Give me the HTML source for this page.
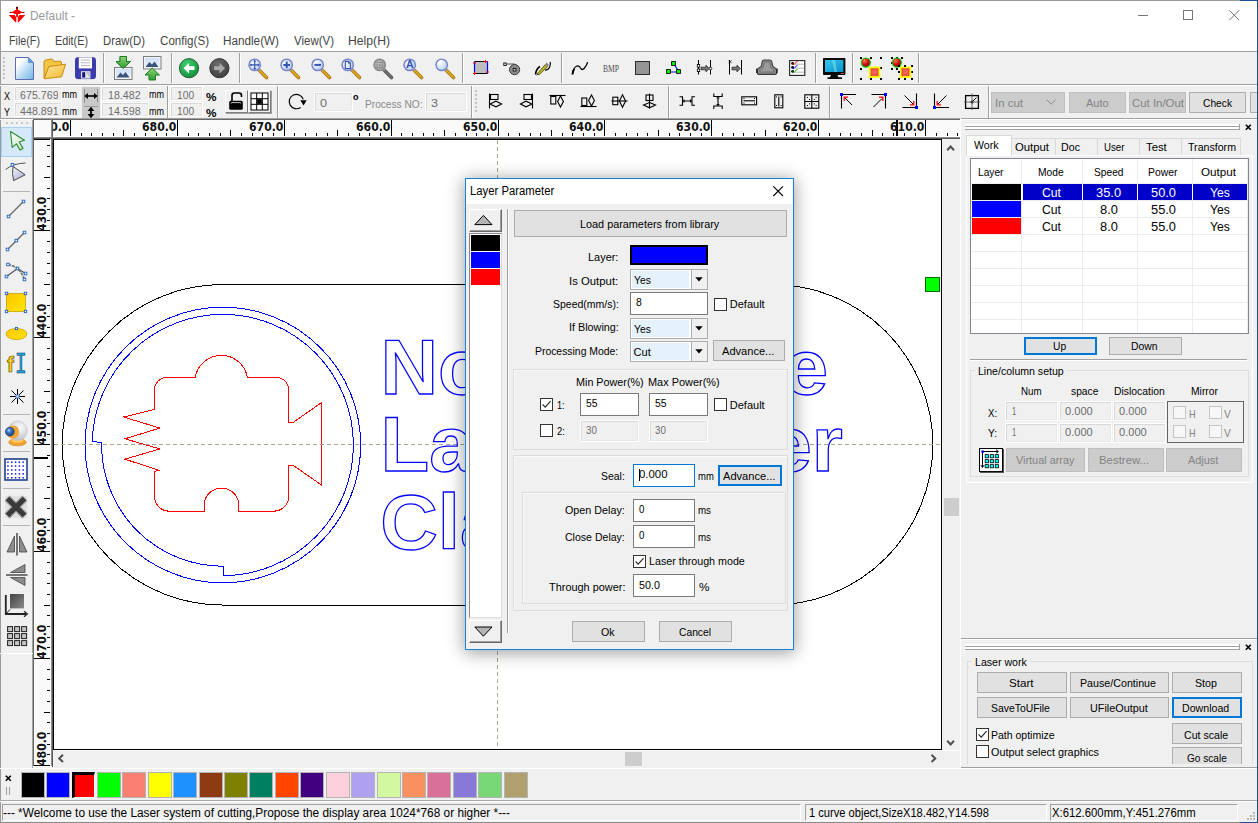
<!DOCTYPE html>
<html><head><meta charset="utf-8"><title>Default -</title>
<style>
html,body{margin:0;padding:0;}
body{width:1258px;height:823px;position:relative;overflow:hidden;background:#f0f0f0;font-family:"Liberation Sans",sans-serif;font-size:11px;}
div,svg,span.t{position:absolute;box-sizing:border-box;}
span.t{white-space:pre;line-height:normal;transform-origin:0 0;}
svg{overflow:visible;}
.in{background:#f0f0f0;border:1px solid #fff;box-shadow:inset 1px 1px 0 #d9d9d9, inset -1px -1px 0 #e8e8e8;}
.btn{background:#e1e1e1;border:1px solid #adadad;}
.btnd{background:#cccccc;border:1px solid #bfbfbf;}
</style></head><body>
<!-- s1_frame -->
<div style="left:0px;top:0px;width:1258px;height:51px;background:#fff"></div>
<div style="left:0px;top:0px;width:1258px;height:1px;background:#9a9a9a"></div>
<div style="left:0px;top:0px;width:1px;height:823px;background:#9a9a9a"></div>
<div style="left:1240px;top:0px;width:18px;height:1px;background:#1d4f8c"></div>
<svg style="left:8px;top:6px;" width="18" height="17" viewBox="0 0 18 17"><g fill="#f00"><rect x="8.1" y="0.9" width="1.9" height="10"/><path d="M1.8 5.9 L4 5.9 L7.6 4 L10.6 4 L14.2 5.9 L16.2 5.9 L16.2 7 L12.3 7 L12.3 7.9 L5.8 7.9 L5.8 7 L1.8 7 Z"/><path d="M0.8 9 L6.6 9 L7.9 10.8 L8.3 10.8 L8.3 16.3 L7.5 16.3 Z M17.3 9 L11.5 9 L10.2 10.8 L9.8 10.8 L9.8 16.3 L10.6 16.3 Z"/></g><rect x="8.1" y="0.9" width="1.9" height="1.8" fill="#500"/><rect x="1.8" y="5.9" width="1.6" height="1.1" fill="#600"/><rect x="14.6" y="5.9" width="1.6" height="1.1" fill="#600"/></svg>
<span class="t" style="left:30.30px;top:9.44px;font-size:12px;color:#999;transform:scaleX(0.9922);">Default -</span>
<svg style="left:1136px;top:10px;" width="102" height="12" viewBox="0 0 102 12"><g stroke="#777" stroke-width="1" fill="none"><path d="M2 5.5 H12"/><rect x="47.5" y="0.5" width="9" height="9"/><path d="M93.3 0.3 L103.2 10.2 M103.2 0.3 L93.3 10.2"/></g></svg>
<span class="t" style="left:8.50px;top:34.14px;font-size:12px;color:#454545;transform:scaleX(0.8944);">File(F)</span>
<span class="t" style="left:54.50px;top:34.14px;font-size:12px;color:#454545;transform:scaleX(0.8998);">Edit(E)</span>
<span class="t" style="left:102.50px;top:34.14px;font-size:12px;color:#454545;transform:scaleX(0.9404);">Draw(D)</span>
<span class="t" style="left:159.50px;top:34.14px;font-size:12px;color:#454545;transform:scaleX(0.9667);">Config(S)</span>
<span class="t" style="left:223.00px;top:34.14px;font-size:12px;color:#454545;transform:scaleX(0.9765);">Handle(W)</span>
<span class="t" style="left:294.00px;top:34.14px;font-size:12px;color:#454545;transform:scaleX(0.9571);">View(V)</span>
<span class="t" style="left:348.00px;top:34.14px;font-size:12px;color:#454545;transform:scaleX(1.0160);">Help(H)</span>
<div style="left:0px;top:51px;width:1258px;height:1px;background:#a0a0a0"></div>
<div style="left:0px;top:84px;width:1258px;height:1px;background:#a0a0a0"></div>
<div style="left:0px;top:85px;width:1258px;height:1px;background:#fff"></div>
<div style="left:0px;top:118px;width:1258px;height:1px;background:#a0a0a0"></div>
<div style="left:0px;top:119px;width:1258px;height:1px;background:#fff"></div>
<!-- s2_tb1 -->
<svg width="0" height="0" style="left:0;top:0"><defs>
<radialGradient id="lens" cx="0.35" cy="0.3" r="0.8"><stop offset="0" stop-color="#ffffff"/><stop offset="0.6" stop-color="#cfe0f7"/><stop offset="1" stop-color="#a9c4ee"/></radialGradient>
<radialGradient id="lensg" cx="0.35" cy="0.3" r="0.8"><stop offset="0" stop-color="#bbb"/><stop offset="1" stop-color="#999"/></radialGradient>
<linearGradient id="pg" x1="0" y1="0" x2="1" y2="1"><stop offset="0.22" stop-color="#ffffff"/><stop offset="0.6" stop-color="#b5d8f3"/><stop offset="1" stop-color="#6fb4e6"/></linearGradient>
<linearGradient id="fold" x1="0" y1="0" x2="1" y2="1"><stop offset="0" stop-color="#fde9a0"/><stop offset="1" stop-color="#f0b62c"/></linearGradient>
<linearGradient id="gar" x1="0" y1="0" x2="0" y2="1"><stop offset="0" stop-color="#8fd67a"/><stop offset="1" stop-color="#2f9a2f"/></linearGradient>
<linearGradient id="sky" x1="0" y1="0" x2="0" y2="1"><stop offset="0" stop-color="#cfe0f8"/><stop offset="1" stop-color="#e8f0fb"/></linearGradient>
<radialGradient id="gball" cx="0.4" cy="0.3" r="0.8"><stop offset="0" stop-color="#3fd070"/><stop offset="1" stop-color="#0e8a36"/></radialGradient>
<radialGradient id="kball" cx="0.4" cy="0.3" r="0.8"><stop offset="0" stop-color="#6a6a6a"/><stop offset="1" stop-color="#3c3c3c"/></radialGradient>
<radialGradient id="rball" cx="0.35" cy="0.3" r="0.8"><stop offset="0" stop-color="#ff7a5a"/><stop offset="0.5" stop-color="#d01010"/><stop offset="1" stop-color="#7a0000"/></radialGradient>
<radialGradient id="rsq" cx="0.5" cy="0.5" r="0.7"><stop offset="0" stop-color="#f07060"/><stop offset="1" stop-color="#e03030"/></radialGradient>
<linearGradient id="scr" x1="0" y1="0" x2="1" y2="1"><stop offset="0" stop-color="#35c7ee"/><stop offset="1" stop-color="#0c93c9"/></linearGradient>
</defs></svg>
<div style="left:3px;top:57px;width:2px;height:2px;background:#c4c4c4"></div>
<div style="left:3px;top:61px;width:2px;height:2px;background:#c4c4c4"></div>
<div style="left:3px;top:65px;width:2px;height:2px;background:#c4c4c4"></div>
<div style="left:3px;top:69px;width:2px;height:2px;background:#c4c4c4"></div>
<div style="left:3px;top:73px;width:2px;height:2px;background:#c4c4c4"></div>
<div style="left:3px;top:77px;width:2px;height:2px;background:#c4c4c4"></div>
<svg style="left:15px;top:57px;" width="20" height="24" viewBox="0 0 20 24"><path d="M0.5 0.5 H13.5 L18.5 5.5 V22.5 H0.5 Z" fill="url(#pg)" stroke="#5f6cb4"/><path d="M13.5 0.5 V5.5 H18.5 Z" fill="#5b9be8" stroke="#5b86c9" stroke-width="0.8"/></svg>
<svg style="left:43px;top:58px;" width="24" height="23" viewBox="0 0 24 23"><path d="M1 20 L1 4 Q1 2.2 3 2 L8 1 Q9.5 0.8 10 2 L10.5 3.5 L17 3.2 Q18.5 3.2 18.5 5 L18.5 8 L6 9 Z" fill="#f4c543" stroke="#c98d14"/>
<path d="M1.2 20.8 L5.8 8.6 L22.6 6.2 L18.6 18.8 Z" fill="url(#fold)" stroke="#c98d14"/></svg>
<svg style="left:75px;top:57px;" width="22" height="23" viewBox="0 0 22 23"><path d="M2.2 0.8 H18.6 Q20.4 0.8 20.4 2.6 V19.6 Q20.4 21.6 18.6 21.6 H2.4 Q0.6 21.6 0.6 19.6 V2.6 Q0.6 0.8 2.2 0.8Z" fill="#3c3cb0" stroke="#30309c"/>
<rect x="3.8" y="0.4" width="13.2" height="11" fill="#fff"/><path d="M6 3H15M6 5.8H15M6 8.6H15" stroke="#b4b4b4" stroke-width="1"/>
<rect x="6" y="14.2" width="9.4" height="7.4" fill="#e4e6ee"/><rect x="7.2" y="15.2" width="3" height="5.4" fill="#16167a"/><path d="M11 15L14.6 15L14.6 21Z" fill="#a8a8b4" opacity=".7"/></svg>
<div style="left:103px;top:53px;width:1px;height:30px;background:#a0a0a0"></div>
<div style="left:104px;top:53px;width:1px;height:30px;background:#fff"></div>
<svg style="left:114px;top:56px;" width="19" height="25" viewBox="0 0 19 25"><path d="M6 0.5 H12.5 V5.5 H16.5 L9.2 12.5 L2 5.5 H6 Z" fill="url(#gar)" stroke="#1f7d22"/>
<rect x="0.5" y="11.5" width="17.5" height="12" fill="#f4f4f4" stroke="#7d7d7d"/><rect x="2" y="13" width="14.5" height="9" fill="url(#sky)"/>
<path d="M2.5 21.5 L6.5 16.5 L9 19 L11.5 16 L15.5 21.5 Z" fill="#3b5378"/>
<path d="M6 0.5 H12.5 V5.5 H16.5 L9.2 12.5 L2 5.5 H6 Z" fill="url(#gar)" stroke="#1f7d22" opacity="0.9"/></svg>
<svg style="left:143px;top:56px;" width="19" height="25" viewBox="0 0 19 25"><rect x="0.5" y="0.5" width="17.5" height="12.5" fill="#f4f4f4" stroke="#7d7d7d"/><rect x="2" y="2" width="14.5" height="9.5" fill="url(#sky)"/>
<path d="M2.5 11 L6.5 6 L9 8.5 L11.5 5.5 L15.5 11 Z" fill="#3b5378"/>
<path d="M9.2 12 L16.5 19 H12.5 V24 H6 V19 H2 Z" fill="url(#gar)" stroke="#1f7d22"/></svg>
<div style="left:171px;top:53px;width:1px;height:30px;background:#a0a0a0"></div>
<div style="left:172px;top:53px;width:1px;height:30px;background:#fff"></div>
<svg style="left:179px;top:58px;" width="21" height="21" viewBox="0 0 21 21"><circle cx="10" cy="10.2" r="9.6" fill="url(#gball)" stroke="#2c5a3a"/><path d="M4.5 10.2 L10 5 V8.3 H15.5 V12.1 H10 V15.4 Z" fill="#fff"/></svg>
<svg style="left:209px;top:58px;" width="21" height="21" viewBox="0 0 21 21"><circle cx="10.4" cy="10.2" r="9.6" fill="url(#kball)" stroke="#333"/><path d="M16 10.2 L10.5 5 V8.3 H5 V12.1 H10.5 V15.4 Z" fill="#a9a9a9"/></svg>
<div style="left:239px;top:53px;width:1px;height:30px;background:#a0a0a0"></div>
<div style="left:240px;top:53px;width:1px;height:30px;background:#fff"></div>
<svg style="left:248px;top:58px;" width="21" height="22" viewBox="0 0 21 22"><path d="M10.5 11.5 L18.5 19.5" stroke="#a87612" stroke-width="3.6" stroke-linecap="round"/>
<path d="M11 12 L18.3 19.3" stroke="#d8a324" stroke-width="2.2" stroke-linecap="round"/>
<path d="M8.5 9.5 L11.5 12.5" stroke="#9aa0c8" stroke-width="2"/>
<circle cx="6.7" cy="6.9" r="5.7" fill="url(#lens)" stroke="#7b84c9" stroke-width="1.5"/><path d="M6.7 2.6V11.2M2.4 6.9H11" stroke="#3553b0" stroke-width="1.1"/><path d="M6.7 1.8L5.2 3.8H8.2ZM6.7 12L5.2 10H8.2ZM1.6 6.9L3.6 5.4V8.4ZM11.8 6.9L9.8 5.4V8.4Z" fill="#3553b0"/></svg>
<svg style="left:280px;top:58px;" width="21" height="22" viewBox="0 0 21 22"><path d="M10.5 11.5 L18.5 19.5" stroke="#a87612" stroke-width="3.6" stroke-linecap="round"/>
<path d="M11 12 L18.3 19.3" stroke="#d8a324" stroke-width="2.2" stroke-linecap="round"/>
<path d="M8.5 9.5 L11.5 12.5" stroke="#9aa0c8" stroke-width="2"/>
<circle cx="6.7" cy="6.9" r="5.7" fill="url(#lens)" stroke="#7b84c9" stroke-width="1.5"/><path d="M6.7 3.6V10.2M3.4 6.9H10" stroke="#3553b0" stroke-width="2"/></svg>
<svg style="left:311px;top:58px;" width="21" height="22" viewBox="0 0 21 22"><path d="M10.5 11.5 L18.5 19.5" stroke="#a87612" stroke-width="3.6" stroke-linecap="round"/>
<path d="M11 12 L18.3 19.3" stroke="#d8a324" stroke-width="2.2" stroke-linecap="round"/>
<path d="M8.5 9.5 L11.5 12.5" stroke="#9aa0c8" stroke-width="2"/>
<circle cx="6.7" cy="6.9" r="5.7" fill="url(#lens)" stroke="#7b84c9" stroke-width="1.5"/><path d="M3.4 6.9H10" stroke="#3553b0" stroke-width="2"/></svg>
<svg style="left:341px;top:58px;" width="21" height="22" viewBox="0 0 21 22"><path d="M10.5 11.5 L18.5 19.5" stroke="#a87612" stroke-width="3.6" stroke-linecap="round"/>
<path d="M11 12 L18.3 19.3" stroke="#d8a324" stroke-width="2.2" stroke-linecap="round"/>
<path d="M8.5 9.5 L11.5 12.5" stroke="#9aa0c8" stroke-width="2"/>
<circle cx="6.7" cy="6.9" r="5.7" fill="url(#lens)" stroke="#7b84c9" stroke-width="1.5"/><path d="M4.3 3.4H7.6L9.3 5.1V10.5H4.3Z" fill="#e8eefc" stroke="#3553b0" stroke-width="1.1"/><path d="M7.4 3.6V5.3H9.1" fill="none" stroke="#3553b0" stroke-width="0.8"/></svg>
<svg style="left:373px;top:58px;" width="21" height="22" viewBox="0 0 21 22"><path d="M10.5 11.5 L18.5 19.5" stroke="#555" stroke-width="3.6" stroke-linecap="round"/>
<path d="M11 12 L18.3 19.3" stroke="#6e6e6e" stroke-width="2.2" stroke-linecap="round"/>
<path d="M8.5 9.5 L11.5 12.5" stroke="#9aa0c8" stroke-width="2"/>
<circle cx="6.7" cy="6.9" r="5.7" fill="url(#lensg)" stroke="#8a8a8a" stroke-width="1.5"/><g fill="#777"><circle cx="4.2" cy="4.4" r=".7"/><circle cx="6.7" cy="4.4" r=".7"/><circle cx="9.2" cy="4.4" r=".7"/><circle cx="4.2" cy="6.9" r=".7"/><circle cx="6.7" cy="6.9" r=".7"/><circle cx="9.2" cy="6.9" r=".7"/><circle cx="4.2" cy="9.4" r=".7"/><circle cx="6.7" cy="9.4" r=".7"/><circle cx="9.2" cy="9.4" r=".7"/></g></svg>
<svg style="left:403px;top:58px;" width="21" height="22" viewBox="0 0 21 22"><path d="M10.5 11.5 L18.5 19.5" stroke="#a87612" stroke-width="3.6" stroke-linecap="round"/>
<path d="M11 12 L18.3 19.3" stroke="#d8a324" stroke-width="2.2" stroke-linecap="round"/>
<path d="M8.5 9.5 L11.5 12.5" stroke="#9aa0c8" stroke-width="2"/>
<circle cx="6.7" cy="6.9" r="5.7" fill="url(#lens)" stroke="#7b84c9" stroke-width="1.5"/><text x="6.75" y="10.4" text-anchor="middle" font-family="Liberation Sans,sans-serif" font-weight="bold" font-size="10.5" fill="#3553b0">A</text></svg>
<svg style="left:435px;top:58px;" width="21" height="22" viewBox="0 0 21 22"><path d="M10.5 11.5 L18.5 19.5" stroke="#a87612" stroke-width="3.6" stroke-linecap="round"/>
<path d="M11 12 L18.3 19.3" stroke="#d8a324" stroke-width="2.2" stroke-linecap="round"/>
<path d="M8.5 9.5 L11.5 12.5" stroke="#9aa0c8" stroke-width="2"/>
<circle cx="6.7" cy="6.9" r="5.7" fill="url(#lens)" stroke="#7b84c9" stroke-width="1.5"/><path d="M3.2 5.2 Q4.2 2.8 6.6 2.6" stroke="#fff" stroke-width="1.6" fill="none"/></svg>
<div style="left:462px;top:53px;width:1px;height:30px;background:#a0a0a0"></div>
<div style="left:463px;top:53px;width:1px;height:30px;background:#fff"></div>
<svg style="left:473px;top:60px;" width="17" height="16" viewBox="0 0 17 16"><rect x="1.5" y="1.5" width="13" height="12" fill="#bdbdbd"/><path d="M1.5 1.5H14.5M1.5 13.5H14.5" stroke="#000" stroke-width="1"/><path d="M1.5 1.5V13.5M14.5 1.5V13.5" stroke="#00f" stroke-width="1.2"/>
<path d="M0 3H3M1.5 12V15M11 1.5H14M12.5 0V3M13 12H16M0 13.5H3" stroke="#f00" stroke-width="1"/></svg>
<svg style="left:503px;top:62px;" width="18" height="14" viewBox="0 0 18 14"><rect x="0.8" y="1" width="2.4" height="2.4" fill="#fff" stroke="#000" stroke-width="0.9"/><path d="M3.5 2H11.5L15 4.5" stroke="#444" stroke-width="0.9" fill="none"/>
<circle cx="11.6" cy="7.6" r="5.1" fill="#8c8c8c" stroke="#3a3a3a" stroke-width="1"/><rect x="10.2" y="6.4" width="2.8" height="2.6" fill="#d0d0d0" stroke="#111" stroke-width="0.9"/></svg>
<svg style="left:534px;top:61px;" width="19" height="15" viewBox="0 0 19 15"><path d="M1.5 13.5 Q2 8 6 5.5" stroke="#000" stroke-width="1.6" fill="none"/><path d="M11 9.2 Q14.5 9.2 15.8 5.5 Q16.6 2.8 16.2 1" stroke="#000" stroke-width="1.2" fill="none"/>
<path d="M3 13 L11.2 3.6 L13.6 5.6 L5.4 13.6 Z" fill="#b8b020" stroke="#55500a" stroke-width="0.8"/><path d="M11.2 3.6 L12.4 1.6 L14.8 3.4 L13.6 5.6Z" fill="#8a8a8a"/><path d="M3 13 L2.2 14.4 L5.4 13.6Z" fill="#333"/></svg>
<div style="left:561px;top:53px;width:1px;height:30px;background:#a0a0a0"></div>
<div style="left:562px;top:53px;width:1px;height:30px;background:#fff"></div>
<svg style="left:571px;top:61px;" width="19" height="15" viewBox="0 0 19 15"><path d="M1.5 13 Q2.5 6 6 5 Q8.5 4.5 9.5 7 Q11 10 13.5 7 Q16 4 16.6 1.2" stroke="#000" stroke-width="1.3" fill="none"/><path d="M1.5 13.5 Q1.8 10 3.2 8" stroke="#000" stroke-width="2" fill="none"/></svg>
<span class="t" style="left:603.00px;top:62.95px;font-size:10px;color:#505050;transform:scaleX(0.7614);font-family:&quot;Liberation Serif&quot;,serif;">BMP</span>
<div style="left:635px;top:61px;width:15px;height:14px;background:#959595;border:1px solid #2b2b2b"></div>
<svg style="left:666px;top:61px;" width="17" height="15" viewBox="0 0 17 15"><path d="M8 3 L13 11 H3" stroke="#00f" stroke-width="1.1" fill="none"/><g fill="#0f0" stroke="#000" stroke-width="0.9"><rect x="5.6" y="0.6" width="3.8" height="3.8"/><rect x="0.6" y="8.6" width="3.8" height="3.8"/><rect x="10.6" y="8.6" width="3.8" height="3.8"/></g></svg>
<svg style="left:696px;top:59px;" width="17" height="17" viewBox="0 0 17 17"><path d="M2.5 1V15.5M14.5 1V15.5" stroke="#000" stroke-width="1"/><rect x="1.3" y="5.5" width="2.4" height="2.6" fill="#fff" stroke="#000" stroke-width=".8"/><rect x="1.3" y="10" width="2.4" height="2.6" fill="#fff" stroke="#000" stroke-width=".8"/>
<path d="M5 8.2H10V6.2L13.2 9.5L10 12.8V10.8H5Z" fill="#7a7a7a" stroke="#222" stroke-width=".8"/><circle cx="14.5" cy="9.5" r="1.3" fill="#fff" stroke="#000" stroke-width=".8"/></svg>
<svg style="left:727px;top:59px;" width="17" height="17" viewBox="0 0 17 17"><path d="M2.5 1V15.5M14.5 1V15.5" stroke="#000" stroke-width="1"/><path d="M1.6 1.2L4.6 4.2M4.6 1.2L1.6 4.2" stroke="#000" stroke-width=".7"/>
<path d="M5 8.2H10V6.2L13.2 9.5L10 12.8V10.8H5Z" fill="#7a7a7a" stroke="#222" stroke-width=".8"/></svg>
<svg style="left:756px;top:59px;" width="22" height="17" viewBox="0 0 22 17"><path d="M8.2 1 H13.8 Q15.4 1 15.8 2.6 L16.6 6.6 Q17 8 18.4 8.6 Q20.6 9.6 20.6 11.8 V14 Q20.6 15.4 19.2 15.4 H2.8 Q1.4 15.4 1.4 14 V11.8 Q1.4 9.6 3.6 8.6 Q5 8 5.4 6.6 L6.2 2.6 Q6.6 1 8.2 1Z" fill="#8e8e8e" stroke="#3c3c3c" stroke-width="1.1"/><path d="M8.6 3 H13.4 L14.6 8 Q15 9.6 16.6 10.2 Q18.2 11 18.2 13 H3.8 Q3.8 11 5.4 10.2 Q7 9.6 7.4 8Z" fill="#9c9c9c" stroke="#6a6a6a" stroke-width=".8"/><path d="M0.8 9.5V14M21 9.5V14" stroke="#222" stroke-width="1.4"/></svg>
<svg style="left:789px;top:60px;" width="17" height="16" viewBox="0 0 17 16"><rect x="0.6" y="0.6" width="15.2" height="14.8" fill="#fff" stroke="#222" stroke-width="1.1"/><path d="M6 4.2H15M6 8.2H15M6 12.2H15" stroke="#b5b5b5" stroke-width="1"/>
<circle cx="3.6" cy="3.4" r="1.4" fill="#000"/><circle cx="3.6" cy="7.4" r="1.4" fill="#000"/><circle cx="3.6" cy="11.4" r="1.4" fill="#000"/>
<path d="M3.4 3.6L5 4.6L8.4 1" stroke="#e00" stroke-width="1" fill="none"/><path d="M3.4 7.6L5 8.6L8.4 5" stroke="#00e" stroke-width="1" fill="none"/><path d="M3.4 11.6L5 12.6L8.4 9" stroke="#0b0" stroke-width="1" fill="none"/></svg>
<div style="left:815px;top:53px;width:1px;height:30px;background:#a0a0a0"></div>
<div style="left:816px;top:53px;width:1px;height:30px;background:#fff"></div>
<svg style="left:823px;top:58px;" width="23" height="22" viewBox="0 0 23 22"><rect x="0" y="0" width="22.4" height="17" rx="0.8" fill="#0a0a0a"/><rect x="2" y="2" width="18.4" height="12" fill="url(#scr)"/><path d="M9 2 L12 2 L14 14 L11.5 14Z" fill="#7fe0f7" opacity=".55"/>
<rect x="18" y="15" width="2.6" height="1" fill="#e06030"/><path d="M8 17H14.5L15.5 19.2H19V21H4.5V19.2H7Z" fill="#0a0a0a"/></svg>
<div style="left:852px;top:53px;width:1px;height:30px;background:#a0a0a0"></div>
<div style="left:853px;top:53px;width:1px;height:30px;background:#fff"></div>
<svg style="left:860px;top:57px;" width="22" height="23" viewBox="0 0 22 23"><rect x="0" y="0" width="2" height="2" fill="#000"/><rect x="10" y="0" width="2" height="2" fill="#000"/><rect x="20" y="0" width="2" height="2" fill="#000"/><rect x="0" y="11" width="2" height="2" fill="#000"/><rect x="20" y="10" width="2" height="2" fill="#000"/><rect x="0" y="21" width="2" height="2" fill="#000"/><rect x="10" y="21" width="2" height="2" fill="#000"/><rect x="20" y="21" width="2" height="2" fill="#000"/><circle cx="5.8" cy="5.6" r="4.6" fill="url(#rball)" stroke="#0d0" stroke-width="1.1"/><rect x="9.6" y="10.4" width="9.8" height="9.6" fill="url(#rsq)" stroke="#ff0" stroke-width="1.8"/></svg>
<svg style="left:891px;top:57px;" width="23" height="23" viewBox="0 0 23 23"><rect x="0" y="0" width="2" height="2" fill="#000"/><rect x="5" y="0" width="2" height="2" fill="#000"/><rect x="10" y="0" width="2" height="2" fill="#000"/><rect x="0" y="5" width="2" height="2" fill="#000"/><rect x="0" y="11" width="2" height="2" fill="#000"/><rect x="5" y="11" width="2" height="2" fill="#000"/><rect x="10" y="11" width="2" height="2" fill="#000"/><rect x="7" y="8" width="2" height="2" fill="#000"/><rect x="13" y="8" width="2" height="2" fill="#000"/><rect x="20" y="8" width="2" height="2" fill="#000"/><rect x="7" y="14" width="2" height="2" fill="#000"/><rect x="20" y="14" width="2" height="2" fill="#000"/><rect x="7" y="21" width="2" height="2" fill="#000"/><rect x="13" y="21" width="2" height="2" fill="#000"/><rect x="20" y="21" width="2" height="2" fill="#000"/><circle cx="5.8" cy="5.6" r="4.6" fill="url(#rball)" stroke="#0d0" stroke-width="1.1"/><rect x="9.6" y="10.4" width="9.8" height="9.6" fill="url(#rsq)" stroke="#ff0" stroke-width="1.8"/><rect x="7" y="8" width="2" height="2" fill="#000"/><rect x="7" y="14" width="2" height="2" fill="#000"/><rect x="13" y="8" width="2" height="2" fill="#000"/></svg>
<div style="left:918px;top:53px;width:1px;height:30px;background:#a0a0a0"></div>
<div style="left:919px;top:53px;width:1px;height:30px;background:#fff"></div>
<!-- s3_tb2 -->
<span class="t" style="left:4.00px;top:90.05px;font-size:11px;color:#000;transform:scaleX(0.8177);">X</span>
<span class="t" style="left:4.00px;top:106.05px;font-size:11px;color:#000;transform:scaleX(0.8177);">Y</span>
<div class="in" style="left:14px;top:86px;width:48px;height:15px;"></div>
<div style="left:16px;top:87px;width:42.2px;height:13px;overflow:hidden">
<span class="t" style="left:3.60px;top:1.95px;font-size:11px;color:#6d6d6d;transform:scaleX(0.9707);">675.769</span>
</div>
<div class="in" style="left:14px;top:102px;width:48px;height:15px;"></div>
<div style="left:16px;top:103px;width:42.2px;height:13px;overflow:hidden">
<span class="t" style="left:3.60px;top:2.45px;font-size:11px;color:#6d6d6d;transform:scaleX(0.9707);">448.891</span>
</div>
<span class="t" style="left:62.00px;top:87.75px;font-size:11px;color:#000;transform:scaleX(0.8185);">mm</span>
<span class="t" style="left:62.00px;top:104.64px;font-size:11px;color:#000;transform:scaleX(0.8185);">mm</span>
<div style="left:82px;top:87px;width:18px;height:31px;background:#c9c9c9"></div>
<svg style="left:82px;top:87px;" width="18" height="31" viewBox="0 0 18 31"><path d="M2.5 2V15.5M15.5 2V15.5" stroke="#8c8c8c" stroke-width="1"/><path d="M2 19.5H16" stroke="#9a9a9a"/><path d="M3.5 9H14.5" stroke="#000" stroke-width="1.6"/><path d="M2.2 9L6 6V12ZM15.8 9L12 6V12Z" fill="#000"/>
<path d="M9 22V29.5" stroke="#000" stroke-width="1.8"/><path d="M9 19.8L5.6 24H12.4ZM9 31.2L5.6 27H12.4Z" fill="#000"/></svg>
<div class="in" style="left:101px;top:86px;width:48px;height:15px;"></div>
<span class="t" style="left:108.00px;top:88.95px;font-size:11px;color:#6d6d6d;transform:scaleX(0.9689);">18.482</span>
<div class="in" style="left:101px;top:102px;width:48px;height:15px;"></div>
<span class="t" style="left:108.00px;top:105.45px;font-size:11px;color:#6d6d6d;transform:scaleX(0.9689);">14.598</span>
<span class="t" style="left:149.00px;top:87.75px;font-size:11px;color:#000;transform:scaleX(0.8185);">mm</span>
<span class="t" style="left:149.00px;top:104.64px;font-size:11px;color:#000;transform:scaleX(0.8185);">mm</span>
<div style="left:167px;top:86px;width:1px;height:32px;background:#a0a0a0"></div>
<div style="left:168px;top:86px;width:1px;height:32px;background:#fff"></div>
<div class="in" style="left:170px;top:86px;width:33px;height:15px;"></div>
<span class="t" style="left:177.00px;top:88.95px;font-size:11px;color:#6d6d6d;transform:scaleX(0.9371);">100</span>
<div class="in" style="left:170px;top:102px;width:33px;height:15px;"></div>
<span class="t" style="left:177.00px;top:105.45px;font-size:11px;color:#6d6d6d;transform:scaleX(0.9371);">100</span>
<span class="t" style="left:206.00px;top:90.55px;font-size:11px;color:#000;font-weight:bold;transform:scaleX(1.0736);">%</span>
<span class="t" style="left:206.00px;top:106.55px;font-size:11px;color:#000;font-weight:bold;transform:scaleX(1.0736);">%</span>
<div style="left:225px;top:90px;width:23px;height:23px;background:#f0f0f0;border-top:1px solid #fff;border-left:1px solid #fff;border-right:1px solid #808080;border-bottom:1px solid #808080;box-shadow:1px 1px 0 #a0a0a0"></div>
<div style="left:248px;top:90px;width:23px;height:23px;background:#f0f0f0;border-top:1px solid #fff;border-left:1px solid #fff;border-right:1px solid #808080;border-bottom:1px solid #808080;box-shadow:1px 1px 0 #a0a0a0"></div>
<svg style="left:225px;top:90px;" width="23" height="23" viewBox="0 0 23 23"><path d="M7 11V5.5Q7 3 9.5 3H14Q16.5 3 16.5 5.5V7" fill="none" stroke="#000" stroke-width="1.6"/><rect x="4.2" y="10.8" width="13.6" height="9" rx="1.6" fill="#000"/><path d="M6 13.5Q6 12.6 7 12.6H15Q16 12.6 16 13.5" stroke="#bbb" stroke-width="1" fill="none"/></svg>
<svg style="left:248px;top:90px;" width="23" height="23" viewBox="0 0 23 23"><rect x="3" y="3" width="17" height="17" fill="#fff" stroke="#000" stroke-width="1"/><path d="M8.7 3V20M14.3 3V20M3 8.7H20M3 14.3H20" stroke="#000" stroke-width="1"/><rect x="9.2" y="9.2" width="4.6" height="4.6" fill="#000"/><rect x="8.2" y="8.2" width="6.6" height="6.6" fill="#000" opacity=".35"/></svg>
<div style="left:277px;top:86px;width:1px;height:32px;background:#a0a0a0"></div>
<div style="left:278px;top:86px;width:1px;height:32px;background:#fff"></div>
<svg style="left:288px;top:93px;" width="20" height="18" viewBox="0 0 20 18"><path d="M15.2 6.2 A7.2 7.2 0 1 0 12.6 14.4" fill="none" stroke="#000" stroke-width="1.2"/><path d="M12.3 7.2H18.6L15.6 12.4Z" fill="#000"/></svg>
<div class="in" style="left:314px;top:92px;width:39px;height:20px;"></div>
<span class="t" style="left:320.00px;top:96.55px;font-size:11px;color:#6d6d6d;transform:scaleX(1.1442);">0</span>
<span class="t" style="left:353.00px;top:91.86px;font-size:9px;color:#000;font-weight:bold;">o</span>
<span class="t" style="left:365.00px;top:98.05px;font-size:11px;color:#8a8a8a;transform:scaleX(0.9222);">Process NO:</span>
<div class="in" style="left:425px;top:92px;width:42px;height:20px;"></div>
<span class="t" style="left:431.00px;top:96.55px;font-size:11px;color:#6d6d6d;transform:scaleX(1.1442);">3</span>
<div style="left:471px;top:86px;width:1px;height:32px;background:#a0a0a0"></div>
<div style="left:472px;top:86px;width:1px;height:32px;background:#fff"></div>
<div style="left:475px;top:90px;width:2px;height:2px;background:#c4c4c4"></div>
<div style="left:475px;top:94px;width:2px;height:2px;background:#c4c4c4"></div>
<div style="left:475px;top:98px;width:2px;height:2px;background:#c4c4c4"></div>
<div style="left:475px;top:102px;width:2px;height:2px;background:#c4c4c4"></div>
<div style="left:475px;top:106px;width:2px;height:2px;background:#c4c4c4"></div>
<div style="left:475px;top:110px;width:2px;height:2px;background:#c4c4c4"></div>
<svg style="left:488px;top:93px;" width="16" height="16" viewBox="0 0 16 16"><g stroke="#000" stroke-width="1.1" fill="none"><path d="M1.5 0.5V15.5"/><rect x="2.5" y="1.5" width="7.5" height="5"/><path d="M2 11L8 8.2L13.6 11L8 13.8Z"/></g></svg>
<svg style="left:518px;top:93px;" width="16" height="16" viewBox="0 0 16 16"><g stroke="#000" stroke-width="1.1" fill="none"><path d="M14.5 0.5V15.5"/><rect x="6" y="1.5" width="7.5" height="5"/><path d="M14 11L8 8.2L2.4 11L8 13.8Z"/></g></svg>
<svg style="left:549px;top:94px;" width="17" height="14" viewBox="0 0 17 14"><g stroke="#000" stroke-width="1.1" fill="none"><path d="M0.5 1.5H16.5"/><rect x="1.8" y="2.5" width="5" height="7.5"/><path d="M11.5 2L14.4 7.5L11.5 13L8.6 7.5Z"/></g></svg>
<svg style="left:580px;top:94px;" width="17" height="14" viewBox="0 0 17 14"><g stroke="#000" stroke-width="1.1" fill="none"><path d="M0.5 12.5H16.5"/><rect x="1.8" y="4" width="5" height="7.5"/><path d="M11.5 1L14.4 6.5L11.5 12L8.6 6.5Z"/></g></svg>
<svg style="left:611px;top:94px;" width="17" height="14" viewBox="0 0 17 14"><g stroke="#000" stroke-width="1.1" fill="none"><path d="M0.5 7H16.5"/><rect x="1.8" y="3.2" width="5" height="7.5"/><path d="M11.5 0.8L14.6 7L11.5 13.2L8.4 7Z"/></g></svg>
<svg style="left:642px;top:93px;" width="16" height="16" viewBox="0 0 16 16"><g stroke="#000" stroke-width="1.1" fill="none"><path d="M7.5 0.5V15.5"/><rect x="4" y="2" width="7" height="5.5"/><path d="M7.5 9.5L13.5 12L7.5 14.8L1.5 12Z"/></g></svg>
<div style="left:668px;top:86px;width:1px;height:32px;background:#a0a0a0"></div>
<div style="left:669px;top:86px;width:1px;height:32px;background:#fff"></div>
<svg style="left:679px;top:96px;" width="17" height="11" viewBox="0 0 17 11"><g stroke="#000" stroke-width="1.1" fill="none"><path d="M0.5 0.8H3.5V9.2H0.5M16 0.8H13V9.2H16M3.5 5H13M5 3.6V6.4M11.5 3.6V6.4"/></g></svg>
<svg style="left:713px;top:93px;" width="11" height="17" viewBox="0 0 11 17"><g stroke="#000" stroke-width="1.1" fill="none"><path d="M0.8 0.5V3.5H9.2V0.5M0.8 16V13H9.2V16M5 3.5V13M3.6 5H6.4M3.6 11.5H6.4"/></g></svg>
<svg style="left:741px;top:96px;" width="17" height="10" viewBox="0 0 17 10"><g stroke="#000" stroke-width="1.1" fill="none" stroke-width="1.3"><rect x="0.8" y="0.8" width="14.8" height="8"/><path d="M2.5 4.8H14"/></g><g fill="#000"><rect x="2.5" y="2" width="1" height="1"/><rect x="13" y="2" width="1" height="1"/><rect x="2.5" y="6.6" width="1" height="1"/><rect x="13" y="6.6" width="1" height="1"/></g></svg>
<svg style="left:774px;top:94px;" width="10" height="15" viewBox="0 0 10 15"><g stroke="#000" stroke-width="1.1" fill="none" stroke-width="1.3"><rect x="0.8" y="0.8" width="8" height="13"/><path d="M4.8 2.5V12.5"/></g><g fill="#000"><rect x="2" y="2.4" width="1" height="1"/><rect x="6.6" y="2.4" width="1" height="1"/><rect x="2" y="11" width="1" height="1"/><rect x="6.6" y="11" width="1" height="1"/></g></svg>
<svg style="left:804px;top:94px;" width="16" height="15" viewBox="0 0 16 15"><g stroke="#000" stroke-width="1.1" fill="none" stroke-width="1.3"><rect x="0.8" y="0.8" width="14" height="13.4"/><path d="M7.8 0.8V14.2M0.8 7.5H14.8"/></g><g fill="#000"><rect x="3" y="3" width="1" height="1"/><rect x="11.6" y="3" width="1" height="1"/><rect x="3" y="11" width="1" height="1"/><rect x="11.6" y="11" width="1" height="1"/><rect x="5" y="5" width="1" height="1"/><rect x="9.8" y="5" width="1" height="1"/><rect x="5" y="9.4" width="1" height="1"/><rect x="9.8" y="9.4" width="1" height="1"/></g></svg>
<div style="left:829px;top:86px;width:1px;height:32px;background:#a0a0a0"></div>
<div style="left:830px;top:86px;width:1px;height:32px;background:#fff"></div>
<svg style="left:840px;top:93px;" width="17" height="16" viewBox="0 0 17 16"><path d="M1.5 1.5V15.5M1.5 1.5H16" stroke="#000" stroke-width="1.1" fill="none"/><path d="M12 12L5 5" stroke="#000" stroke-width="1"/><path d="M4.2 8V4.2H8" stroke="#f00" stroke-width="1.3" fill="none"/><rect x="0" y="0" width="3" height="3" fill="#00f"/></svg>
<svg style="left:871px;top:93px;" width="17" height="16" viewBox="0 0 17 16"><path d="M14.5 1.5V15.5M14.5 1.5H0.5" stroke="#000" stroke-width="1.1" fill="none"/><path d="M2.5 14L11 5.5" stroke="#000" stroke-width="1"/><path d="M8 4.2H11.8V8" stroke="#f00" stroke-width="1.3" fill="none"/><rect x="13" y="0" width="3" height="3" fill="#00f"/></svg>
<svg style="left:902px;top:93px;" width="17" height="16" viewBox="0 0 17 16"><path d="M14.5 0.5V14.5M14.5 14.5H0.5" stroke="#000" stroke-width="1.1" fill="none"/><path d="M2.5 2.5L11 11" stroke="#000" stroke-width="1"/><path d="M8 11.8H11.8V8" stroke="#f00" stroke-width="1.3" fill="none"/><rect x="13" y="13" width="3" height="3" fill="#00f"/></svg>
<svg style="left:933px;top:93px;" width="17" height="16" viewBox="0 0 17 16"><path d="M1.5 0.5V14.5M1.5 14.5H16" stroke="#000" stroke-width="1.1" fill="none"/><path d="M13.5 2.5L5 11" stroke="#000" stroke-width="1"/><path d="M4.2 8V11.8H8" stroke="#f00" stroke-width="1.3" fill="none"/><rect x="0" y="13" width="3" height="3" fill="#00f"/></svg>
<svg style="left:964px;top:93px;" width="17" height="17" viewBox="0 0 17 17"><rect x="1.6" y="2.6" width="12.8" height="12.8" fill="none" stroke="#000" stroke-width="1.3"/><path d="M8 0.5V17M0 9H16" stroke="#555" stroke-width="0.9"/><path d="M8.5 8.5L12.5 4.5" stroke="#000" stroke-width="1"/><circle cx="8" cy="9" r="1.5" fill="#333"/></svg>
<div style="left:988px;top:86px;width:1px;height:32px;background:#a0a0a0"></div>
<div style="left:989px;top:86px;width:1px;height:32px;background:#fff"></div>
<div class="btnd" style="left:991px;top:92px;width:74px;height:21px;"></div>
<span class="t" style="left:995.00px;top:97.05px;font-size:11px;color:#838383;transform:scaleX(1.0408);">In cut</span>
<svg style="left:1046px;top:99px;" width="11" height="7" viewBox="0 0 11 7"><path d="M0.8 0.8L5.2 5.2L9.6 0.8" stroke="#8a8a8a" stroke-width="1" fill="none"/></svg>
<div class="btnd" style="left:1069px;top:92px;width:57px;height:21px;"></div>
<span class="t" style="left:1086.25px;top:97.05px;font-size:11px;color:#838383;transform:scaleX(0.9943);">Auto</span>
<div class="btnd" style="left:1129px;top:92px;width:57px;height:21px;"></div>
<span class="t" style="left:1131.50px;top:97.05px;font-size:11px;color:#838383;transform:scaleX(1.0372);">Cut In/Out</span>
<div class="btn" style="left:1189px;top:92px;width:57px;height:21px;"></div>
<span class="t" style="left:1203.00px;top:97.05px;font-size:11px;color:#000;transform:scaleX(0.9301);">Check</span>
<div class="btn" style="left:1250px;top:92px;width:10px;height:21px;"></div>
<!-- s4_left -->
<div style="left:32px;top:120px;width:1px;height:648px;background:#a0a0a0"></div>
<div style="left:33px;top:120px;width:1px;height:648px;background:#fff"></div>
<div style="left:6px;top:122px;width:2px;height:2px;background:#c8c8c8"></div>
<div style="left:11px;top:122px;width:2px;height:2px;background:#c8c8c8"></div>
<div style="left:16px;top:122px;width:2px;height:2px;background:#c8c8c8"></div>
<div style="left:21px;top:122px;width:2px;height:2px;background:#c8c8c8"></div>
<div style="left:26px;top:122px;width:2px;height:2px;background:#c8c8c8"></div>
<div style="left:1px;top:127px;width:31px;height:30px;background:#d5e8fa;border:1px solid #a4d0f6"></div>
<svg width="0" height="0" style="left:0;top:0"><defs><linearGradient id="arg" x1="0" y1="0" x2="1" y2="1"><stop offset="0" stop-color="#fff"/><stop offset="1" stop-color="#bfe3bf"/></linearGradient><linearGradient id="ndg" x1="0" y1="0" x2="1" y2="1"><stop offset="0" stop-color="#f4f4fb"/><stop offset="1" stop-color="#a3a9cf"/></linearGradient><linearGradient id="yel" x1="0" y1="0" x2="1" y2="1"><stop offset="0" stop-color="#ffc400"/><stop offset="1" stop-color="#ffe600"/></linearGradient><linearGradient id="dkg" x1="0" y1="0" x2="1" y2="1"><stop offset="0" stop-color="#444"/><stop offset="1" stop-color="#8a8a8a"/></linearGradient><radialGradient id="cam" cx="0.6" cy="0.35" r="0.7"><stop offset="0" stop-color="#fff"/><stop offset="1" stop-color="#b9bcc4"/></radialGradient><radialGradient id="lensb" cx="0.4" cy="0.35" r="0.7"><stop offset="0" stop-color="#5aa0e8"/><stop offset="1" stop-color="#123a7a"/></radialGradient></defs></svg>
<svg style="left:0px;top:120px;" width="33" height="40" viewBox="0 0 33 40"><path d="M10.5 11.5 L24.5 20.3 L19.2 22 L23 28.4 L20 30 L16.4 23.8 L12.2 27.4 Z" fill="url(#arg)" stroke="#2e8b2e" stroke-width="1.1" stroke-linejoin="round"/></svg>
<svg style="left:0px;top:160px;" width="33" height="26" viewBox="0 0 33 26"><path d="M5.5 9.5 Q13 3.5 25.5 3" fill="none" stroke="#555" stroke-width="1"/><path d="M13 6.5 L25.2 14.8 L13.6 20.6 Q11.8 14 13 6.5Z" fill="url(#ndg)" stroke="#4a4a4a" stroke-width="1"/><rect x="11.2" y="3.5" width="2.6" height="2.6" fill="#fff" stroke="#1f62c4" stroke-width="0.9"/></svg>
<div style="left:3px;top:191px;width:27px;height:1px;background:#b4b4b4"></div>
<svg style="left:0px;top:196px;" width="33" height="26" viewBox="0 0 33 26"><path d="M8.5 20.5 L23.5 5.5" stroke="#666" stroke-width="1.3"/><rect x="7.2" y="19.2" width="2.6" height="2.6" fill="#fff" stroke="#1f62c4" stroke-width="0.9"/><rect x="22.2" y="4.2" width="2.6" height="2.6" fill="#fff" stroke="#1f62c4" stroke-width="0.9"/></svg>
<svg style="left:0px;top:228px;" width="33" height="26" viewBox="0 0 33 26"><path d="M7.5 21.5 L24.5 4.5" stroke="#666" stroke-width="1.3"/><rect x="6.2" y="20.2" width="2.6" height="2.6" fill="#fff" stroke="#1f62c4" stroke-width="0.9"/><rect x="15.0" y="11.299999999999999" width="2.6" height="2.6" fill="#fff" stroke="#1f62c4" stroke-width="0.9"/><rect x="23.2" y="3.2" width="2.6" height="2.6" fill="#fff" stroke="#1f62c4" stroke-width="0.9"/></svg>
<svg style="left:0px;top:258px;" width="33" height="26" viewBox="0 0 33 26"><path d="M6.5 18.5 L17.5 10.5 L25.5 15.5" stroke="#555" stroke-width="1.2" fill="none"/><path d="M8 6.5 Q14 8 17.5 10.5 Q22 15 24.5 21.5" stroke="#777" stroke-width="1.8" fill="none" stroke-dasharray="3 1"/><rect x="6.7" y="5.2" width="2.6" height="2.6" fill="#fff" stroke="#1f62c4" stroke-width="0.9"/><rect x="16.2" y="9.2" width="2.6" height="2.6" fill="#fff" stroke="#1f62c4" stroke-width="0.9"/><rect x="24.2" y="14.2" width="2.6" height="2.6" fill="#fff" stroke="#1f62c4" stroke-width="0.9"/><rect x="23.2" y="20.2" width="2.6" height="2.6" fill="#fff" stroke="#1f62c4" stroke-width="0.9"/><rect x="5.2" y="17.2" width="2.6" height="2.6" fill="#fff" stroke="#1f62c4" stroke-width="0.9"/></svg>
<svg style="left:0px;top:290px;" width="33" height="26" viewBox="0 0 33 26"><rect x="6.5" y="3.5" width="19" height="18" fill="url(#yel)" stroke="#c9a400" stroke-width="0.8"/><rect x="5.3" y="2.3" width="2.4" height="2.4" fill="#fff" stroke="#1f62c4" stroke-width="0.9"/><rect x="24.3" y="2.3" width="2.4" height="2.4" fill="#fff" stroke="#1f62c4" stroke-width="0.9"/><rect x="5.3" y="20.3" width="2.4" height="2.4" fill="#fff" stroke="#1f62c4" stroke-width="0.9"/><rect x="24.3" y="20.3" width="2.4" height="2.4" fill="#fff" stroke="#1f62c4" stroke-width="0.9"/></svg>
<svg style="left:0px;top:324px;" width="33" height="20" viewBox="0 0 33 20"><ellipse cx="16.5" cy="10" rx="10.4" ry="5.6" fill="url(#yel)" stroke="#c9a400" stroke-width="0.8"/><rect x="15.4" y="3.4" width="2.2" height="2.2" fill="#fff" stroke="#1f62c4" stroke-width="0.9"/></svg>
<span class="t" style="left:7.40px;top:352.49px;font-size:22px;color:#ffd21e;font-weight:bold;transform:scaleX(0.9417);-webkit-text-stroke:0.7px #5a4a00;">f</span>
<span class="t" style="left:14.60px;top:349.15px;font-size:29px;color:#22a0dc;transform:scaleX(0.6703);font-family:'Liberation Mono',monospace;-webkit-text-stroke:0.7px #0d3a5a;">I</span>
<svg style="left:8px;top:387px;" width="19" height="19" viewBox="0 0 19 19"><path d="M9.5 2V17M2 9.5H17" stroke="#000" stroke-width="1" shape-rendering="crispEdges"/><path d="M3.5 3.5L15.5 15.5M15.5 3.5L3.5 15.5" stroke="#000" stroke-width="1"/><rect x="8" y="8" width="3" height="3" fill="#e6eeff" stroke="#3a6fe0" stroke-width="0.9"/></svg>
<div style="left:3px;top:414px;width:27px;height:1px;background:#b4b4b4"></div>
<svg style="left:4px;top:420px;" width="25" height="27" viewBox="0 0 25 27"><ellipse cx="13.5" cy="22.2" rx="8.6" ry="3.6" fill="#f5a32a" stroke="#c97a10" stroke-width=".6"/><ellipse cx="13.5" cy="20.6" rx="6" ry="2.2" fill="#ffc765"/><circle cx="13.8" cy="10.6" r="9.6" fill="url(#cam)" stroke="#c6c8cf" stroke-width=".6"/><ellipse cx="9" cy="12" rx="6.2" ry="6.6" fill="#f2a63a"/><circle cx="5.8" cy="11.6" r="4.4" fill="url(#lensb)" stroke="#0d2a5a" stroke-width=".6"/><circle cx="4.8" cy="10.4" r="1.2" fill="#9cc8ff"/></svg>
<div style="left:3px;top:451px;width:27px;height:1px;background:#b4b4b4"></div>
<svg style="left:4px;top:458px;" width="24" height="23" viewBox="0 0 24 23"><rect x="1" y="1" width="22" height="21" fill="#fff" stroke="#1f3f8f" stroke-width="1.6"/><rect x="3.2" y="3.4" width="1.5" height="1.5" fill="#1414e6"/><rect x="3.2" y="7.3" width="1.5" height="1.5" fill="#1414e6"/><rect x="3.2" y="11.2" width="1.5" height="1.5" fill="#1414e6"/><rect x="3.2" y="15.1" width="1.5" height="1.5" fill="#1414e6"/><rect x="3.2" y="19.0" width="1.5" height="1.5" fill="#1414e6"/><rect x="7.0" y="3.4" width="1.5" height="1.5" fill="#1414e6"/><rect x="7.0" y="7.3" width="1.5" height="1.5" fill="#1414e6"/><rect x="7.0" y="11.2" width="1.5" height="1.5" fill="#1414e6"/><rect x="7.0" y="15.1" width="1.5" height="1.5" fill="#1414e6"/><rect x="7.0" y="19.0" width="1.5" height="1.5" fill="#1414e6"/><rect x="10.8" y="3.4" width="1.5" height="1.5" fill="#1414e6"/><rect x="10.8" y="7.3" width="1.5" height="1.5" fill="#1414e6"/><rect x="10.8" y="11.2" width="1.5" height="1.5" fill="#1414e6"/><rect x="10.8" y="15.1" width="1.5" height="1.5" fill="#1414e6"/><rect x="10.8" y="19.0" width="1.5" height="1.5" fill="#1414e6"/><rect x="14.6" y="3.4" width="1.5" height="1.5" fill="#1414e6"/><rect x="14.6" y="7.3" width="1.5" height="1.5" fill="#1414e6"/><rect x="14.6" y="11.2" width="1.5" height="1.5" fill="#1414e6"/><rect x="14.6" y="15.1" width="1.5" height="1.5" fill="#1414e6"/><rect x="14.6" y="19.0" width="1.5" height="1.5" fill="#1414e6"/><rect x="18.4" y="3.4" width="1.5" height="1.5" fill="#1414e6"/><rect x="18.4" y="7.3" width="1.5" height="1.5" fill="#1414e6"/><rect x="18.4" y="11.2" width="1.5" height="1.5" fill="#1414e6"/><rect x="18.4" y="15.1" width="1.5" height="1.5" fill="#1414e6"/><rect x="18.4" y="19.0" width="1.5" height="1.5" fill="#1414e6"/></svg>
<div style="left:3px;top:488px;width:27px;height:1px;background:#b4b4b4"></div>
<svg style="left:4px;top:495px;" width="24" height="24" viewBox="0 0 24 24"><rect x="1" y="1" width="22" height="22" fill="#d9d9d9" opacity=".6"/><path d="M3 3L21 21M21 3L3 21" stroke="#a8a8a8" stroke-width="7.5"/><path d="M3.5 3.5L20.5 20.5M20.5 3.5L3.5 20.5" stroke="#3a3a3a" stroke-width="5.2"/></svg>
<div style="left:3px;top:525px;width:27px;height:1px;background:#b4b4b4"></div>
<svg style="left:4px;top:532px;" width="26" height="25" viewBox="0 0 26 25"><path d="M13 1V23.5" stroke="#222" stroke-width="1.2"/><path d="M10.5 4V20H3Z M15.5 4V20H23Z" fill="#8c8c8c" stroke="#444" stroke-width=".8"/></svg>
<svg style="left:4px;top:562px;" width="26" height="26" viewBox="0 0 26 26"><path d="M2 13H23.5" stroke="#222" stroke-width="1.2"/><path d="M21 2.5V10.5H6.5Z M21 23.5V15.5H6.5Z" fill="#8c8c8c" stroke="#444" stroke-width=".8"/></svg>
<svg style="left:3px;top:592px;" width="27" height="26" viewBox="0 0 27 26"><rect x="7" y="2" width="14" height="14.4" fill="url(#dkg)"/><path d="M2.8 3V22H23" stroke="#222" stroke-width="1.8" fill="none"/><path d="M21 19.2L24.4 22L21 24.8" stroke="#222" stroke-width="1.2" fill="none"/><path d="M2.8 22L7 17.5" stroke="#222" stroke-width="1"/></svg>
<svg style="left:7px;top:626px;" width="21" height="21" viewBox="0 0 21 21"><rect x="0.6" y="0.6" width="5" height="5" fill="#c4c4c4" stroke="#222" stroke-width="1"/><rect x="0.6" y="7.6" width="5" height="5" fill="#c4c4c4" stroke="#222" stroke-width="1"/><rect x="0.6" y="14.6" width="5" height="5" fill="#c4c4c4" stroke="#222" stroke-width="1"/><rect x="7.6" y="0.6" width="5" height="5" fill="#c4c4c4" stroke="#222" stroke-width="1"/><rect x="7.6" y="7.6" width="5" height="5" fill="#c4c4c4" stroke="#222" stroke-width="1"/><rect x="7.6" y="14.6" width="5" height="5" fill="#c4c4c4" stroke="#222" stroke-width="1"/><rect x="14.6" y="0.6" width="5" height="5" fill="#c4c4c4" stroke="#222" stroke-width="1"/><rect x="14.6" y="7.6" width="5" height="5" fill="#c4c4c4" stroke="#222" stroke-width="1"/><rect x="14.6" y="14.6" width="5" height="5" fill="#c4c4c4" stroke="#222" stroke-width="1"/></svg>
<div style="left:0px;top:653px;width:33px;height:1px;background:#fff"></div>
<!-- s5_canvas -->
<div style="left:33px;top:119px;width:927px;height:18px;background:#fafafa"></div>
<div style="left:33px;top:137px;width:19px;height:630px;background:#fafafa"></div>
<div style="left:33px;top:119px;width:927px;height:1px;background:#696969"></div>
<div style="left:33px;top:119px;width:1px;height:648px;background:#696969"></div>
<div style="left:34px;top:136px;width:926px;height:1px;background:#fff"></div>
<div style="left:33px;top:137px;width:927px;height:1px;background:#8c8c8c"></div>
<div style="left:33px;top:138px;width:927px;height:1px;background:#5a5a5a"></div>
<div style="left:34px;top:139px;width:16px;height:1px;background:#000"></div>
<div style="left:50px;top:120px;width:1px;height:17px;background:#fff"></div>
<div style="left:51px;top:119px;width:1px;height:18px;background:#8c8c8c"></div>
<div style="left:52px;top:119px;width:1px;height:18px;background:#5a5a5a"></div>
<div style="left:50px;top:140px;width:1px;height:627px;background:#fff"></div>
<div style="left:51px;top:139px;width:1px;height:628px;background:#8c8c8c"></div>
<div style="left:52px;top:139px;width:1px;height:628px;background:#5a5a5a"></div>
<div style="left:33px;top:766px;width:19px;height:1px;background:#fff"></div>
<div style="left:960px;top:118px;width:1px;height:650px;background:#fff"></div>
<div style="left:53px;top:139px;width:889px;height:611px;background:#fff;border:1px solid #000;"></div>
<svg style="left:0px;top:0px;shape-rendering:crispEdges;" width="1258" height="823" viewBox="0 0 1258 823"><rect x="70" y="120" width="1" height="16" fill="#000"/><rect x="81" y="133" width="1" height="3" fill="#000"/><rect x="91" y="133" width="1" height="3" fill="#000"/><rect x="102" y="133" width="1" height="3" fill="#000"/><rect x="113" y="133" width="1" height="3" fill="#000"/><rect x="123" y="130" width="1" height="6" fill="#000"/><rect x="134" y="133" width="1" height="3" fill="#000"/><rect x="145" y="133" width="1" height="3" fill="#000"/><rect x="156" y="133" width="1" height="3" fill="#000"/><rect x="166" y="133" width="1" height="3" fill="#000"/><rect x="177" y="120" width="1" height="16" fill="#000"/><rect x="188" y="133" width="1" height="3" fill="#000"/><rect x="198" y="133" width="1" height="3" fill="#000"/><rect x="209" y="133" width="1" height="3" fill="#000"/><rect x="220" y="133" width="1" height="3" fill="#000"/><rect x="230" y="130" width="1" height="6" fill="#000"/><rect x="241" y="133" width="1" height="3" fill="#000"/><rect x="252" y="133" width="1" height="3" fill="#000"/><rect x="262" y="133" width="1" height="3" fill="#000"/><rect x="273" y="133" width="1" height="3" fill="#000"/><rect x="284" y="120" width="1" height="16" fill="#000"/><rect x="294" y="133" width="1" height="3" fill="#000"/><rect x="305" y="133" width="1" height="3" fill="#000"/><rect x="316" y="133" width="1" height="3" fill="#000"/><rect x="327" y="133" width="1" height="3" fill="#000"/><rect x="337" y="130" width="1" height="6" fill="#000"/><rect x="348" y="133" width="1" height="3" fill="#000"/><rect x="359" y="133" width="1" height="3" fill="#000"/><rect x="369" y="133" width="1" height="3" fill="#000"/><rect x="380" y="133" width="1" height="3" fill="#000"/><rect x="391" y="120" width="1" height="16" fill="#000"/><rect x="401" y="133" width="1" height="3" fill="#000"/><rect x="412" y="133" width="1" height="3" fill="#000"/><rect x="423" y="133" width="1" height="3" fill="#000"/><rect x="433" y="133" width="1" height="3" fill="#000"/><rect x="444" y="130" width="1" height="6" fill="#000"/><rect x="455" y="133" width="1" height="3" fill="#000"/><rect x="466" y="133" width="1" height="3" fill="#000"/><rect x="476" y="133" width="1" height="3" fill="#000"/><rect x="487" y="133" width="1" height="3" fill="#000"/><rect x="498" y="120" width="1" height="16" fill="#000"/><rect x="508" y="133" width="1" height="3" fill="#000"/><rect x="519" y="133" width="1" height="3" fill="#000"/><rect x="530" y="133" width="1" height="3" fill="#000"/><rect x="540" y="133" width="1" height="3" fill="#000"/><rect x="551" y="130" width="1" height="6" fill="#000"/><rect x="562" y="133" width="1" height="3" fill="#000"/><rect x="572" y="133" width="1" height="3" fill="#000"/><rect x="583" y="133" width="1" height="3" fill="#000"/><rect x="594" y="133" width="1" height="3" fill="#000"/><rect x="604" y="120" width="1" height="16" fill="#000"/><rect x="615" y="133" width="1" height="3" fill="#000"/><rect x="626" y="133" width="1" height="3" fill="#000"/><rect x="637" y="133" width="1" height="3" fill="#000"/><rect x="647" y="133" width="1" height="3" fill="#000"/><rect x="658" y="130" width="1" height="6" fill="#000"/><rect x="669" y="133" width="1" height="3" fill="#000"/><rect x="679" y="133" width="1" height="3" fill="#000"/><rect x="690" y="133" width="1" height="3" fill="#000"/><rect x="701" y="133" width="1" height="3" fill="#000"/><rect x="711" y="120" width="1" height="16" fill="#000"/><rect x="722" y="133" width="1" height="3" fill="#000"/><rect x="733" y="133" width="1" height="3" fill="#000"/><rect x="743" y="133" width="1" height="3" fill="#000"/><rect x="754" y="133" width="1" height="3" fill="#000"/><rect x="765" y="130" width="1" height="6" fill="#000"/><rect x="776" y="133" width="1" height="3" fill="#000"/><rect x="786" y="133" width="1" height="3" fill="#000"/><rect x="797" y="133" width="1" height="3" fill="#000"/><rect x="808" y="133" width="1" height="3" fill="#000"/><rect x="818" y="120" width="1" height="16" fill="#000"/><rect x="829" y="133" width="1" height="3" fill="#000"/><rect x="840" y="133" width="1" height="3" fill="#000"/><rect x="850" y="133" width="1" height="3" fill="#000"/><rect x="861" y="133" width="1" height="3" fill="#000"/><rect x="872" y="130" width="1" height="6" fill="#000"/><rect x="882" y="133" width="1" height="3" fill="#000"/><rect x="893" y="133" width="1" height="3" fill="#000"/><rect x="904" y="133" width="1" height="3" fill="#000"/><rect x="915" y="133" width="1" height="3" fill="#000"/><rect x="925" y="120" width="1" height="16" fill="#000"/><rect x="936" y="133" width="1" height="3" fill="#000"/><rect x="947" y="133" width="1" height="3" fill="#000"/><rect x="957" y="133" width="1" height="3" fill="#000"/><rect x="47" y="145" width="3" height="1" fill="#000"/><rect x="47" y="156" width="3" height="1" fill="#000"/><rect x="47" y="166" width="3" height="1" fill="#000"/><rect x="44" y="177" width="6" height="1" fill="#000"/><rect x="47" y="188" width="3" height="1" fill="#000"/><rect x="47" y="198" width="3" height="1" fill="#000"/><rect x="47" y="209" width="3" height="1" fill="#000"/><rect x="47" y="220" width="3" height="1" fill="#000"/><rect x="34" y="230" width="16" height="1" fill="#000"/><rect x="47" y="241" width="3" height="1" fill="#000"/><rect x="47" y="252" width="3" height="1" fill="#000"/><rect x="47" y="263" width="3" height="1" fill="#000"/><rect x="47" y="273" width="3" height="1" fill="#000"/><rect x="44" y="284" width="6" height="1" fill="#000"/><rect x="47" y="295" width="3" height="1" fill="#000"/><rect x="47" y="305" width="3" height="1" fill="#000"/><rect x="47" y="316" width="3" height="1" fill="#000"/><rect x="47" y="327" width="3" height="1" fill="#000"/><rect x="34" y="337" width="16" height="1" fill="#000"/><rect x="47" y="348" width="3" height="1" fill="#000"/><rect x="47" y="359" width="3" height="1" fill="#000"/><rect x="47" y="369" width="3" height="1" fill="#000"/><rect x="47" y="380" width="3" height="1" fill="#000"/><rect x="44" y="391" width="6" height="1" fill="#000"/><rect x="47" y="402" width="3" height="1" fill="#000"/><rect x="47" y="412" width="3" height="1" fill="#000"/><rect x="47" y="423" width="3" height="1" fill="#000"/><rect x="47" y="434" width="3" height="1" fill="#000"/><rect x="34" y="444" width="16" height="1" fill="#000"/><rect x="47" y="455" width="3" height="1" fill="#000"/><rect x="47" y="466" width="3" height="1" fill="#000"/><rect x="47" y="476" width="3" height="1" fill="#000"/><rect x="47" y="487" width="3" height="1" fill="#000"/><rect x="44" y="498" width="6" height="1" fill="#000"/><rect x="47" y="508" width="3" height="1" fill="#000"/><rect x="47" y="519" width="3" height="1" fill="#000"/><rect x="47" y="530" width="3" height="1" fill="#000"/><rect x="47" y="541" width="3" height="1" fill="#000"/><rect x="34" y="551" width="16" height="1" fill="#000"/><rect x="47" y="562" width="3" height="1" fill="#000"/><rect x="47" y="573" width="3" height="1" fill="#000"/><rect x="47" y="583" width="3" height="1" fill="#000"/><rect x="47" y="594" width="3" height="1" fill="#000"/><rect x="44" y="605" width="6" height="1" fill="#000"/><rect x="47" y="615" width="3" height="1" fill="#000"/><rect x="47" y="626" width="3" height="1" fill="#000"/><rect x="47" y="637" width="3" height="1" fill="#000"/><rect x="47" y="647" width="3" height="1" fill="#000"/><rect x="34" y="658" width="16" height="1" fill="#000"/><rect x="47" y="669" width="3" height="1" fill="#000"/><rect x="47" y="679" width="3" height="1" fill="#000"/><rect x="47" y="690" width="3" height="1" fill="#000"/><rect x="47" y="701" width="3" height="1" fill="#000"/><rect x="44" y="712" width="6" height="1" fill="#000"/><rect x="47" y="722" width="3" height="1" fill="#000"/><rect x="47" y="733" width="3" height="1" fill="#000"/><rect x="47" y="744" width="3" height="1" fill="#000"/><rect x="47" y="754" width="3" height="1" fill="#000"/><rect x="34" y="765" width="16" height="1" fill="#000"/><rect x="896" y="120" width="2" height="16" fill="#000"/><rect x="34" y="457" width="14" height="2" fill="#000"/></svg>
<div style="left:53px;top:120px;width:906px;height:16px;overflow:hidden">
<span class="t" style="left:-18.10px;top:0.33px;font-size:11.5px;color:#111;font-family:'DejaVu Sans',sans-serif;font-weight:bold;transform:scaleX(0.9457);">690.0</span>
<span class="t" style="left:88.80px;top:0.33px;font-size:11.5px;color:#111;font-family:'DejaVu Sans',sans-serif;font-weight:bold;transform:scaleX(0.9457);">680.0</span>
<span class="t" style="left:195.70px;top:0.33px;font-size:11.5px;color:#111;font-family:'DejaVu Sans',sans-serif;font-weight:bold;transform:scaleX(0.9457);">670.0</span>
<span class="t" style="left:302.60px;top:0.33px;font-size:11.5px;color:#111;font-family:'DejaVu Sans',sans-serif;font-weight:bold;transform:scaleX(0.9457);">660.0</span>
<span class="t" style="left:409.50px;top:0.33px;font-size:11.5px;color:#111;font-family:'DejaVu Sans',sans-serif;font-weight:bold;transform:scaleX(0.9457);">650.0</span>
<span class="t" style="left:516.40px;top:0.33px;font-size:11.5px;color:#111;font-family:'DejaVu Sans',sans-serif;font-weight:bold;transform:scaleX(0.9457);">640.0</span>
<span class="t" style="left:623.30px;top:0.33px;font-size:11.5px;color:#111;font-family:'DejaVu Sans',sans-serif;font-weight:bold;transform:scaleX(0.9457);">630.0</span>
<span class="t" style="left:730.20px;top:0.33px;font-size:11.5px;color:#111;font-family:'DejaVu Sans',sans-serif;font-weight:bold;transform:scaleX(0.9457);">620.0</span>
<span class="t" style="left:837.10px;top:0.33px;font-size:11.5px;color:#111;font-family:'DejaVu Sans',sans-serif;font-weight:bold;transform:scaleX(0.9457);">610.0</span>
</div>
<span class="t" style="left:46.6px;top:231.4px;font-size:11.5px;font-family:'DejaVu Sans',sans-serif;font-weight:bold;color:#111;line-height:1;transform-origin:0 0;transform:rotate(-90deg) scaleX(0.9457) translateY(-10.2px);">430.0</span>
<span class="t" style="left:46.6px;top:338.3px;font-size:11.5px;font-family:'DejaVu Sans',sans-serif;font-weight:bold;color:#111;line-height:1;transform-origin:0 0;transform:rotate(-90deg) scaleX(0.9457) translateY(-10.2px);">440.0</span>
<span class="t" style="left:46.6px;top:445.2px;font-size:11.5px;font-family:'DejaVu Sans',sans-serif;font-weight:bold;color:#111;line-height:1;transform-origin:0 0;transform:rotate(-90deg) scaleX(0.9457) translateY(-10.2px);">450.0</span>
<span class="t" style="left:46.6px;top:552.1px;font-size:11.5px;font-family:'DejaVu Sans',sans-serif;font-weight:bold;color:#111;line-height:1;transform-origin:0 0;transform:rotate(-90deg) scaleX(0.9457) translateY(-10.2px);">460.0</span>
<span class="t" style="left:46.6px;top:659.0px;font-size:11.5px;font-family:'DejaVu Sans',sans-serif;font-weight:bold;color:#111;line-height:1;transform-origin:0 0;transform:rotate(-90deg) scaleX(0.9457) translateY(-10.2px);">470.0</span>
<span class="t" style="left:46.6px;top:765.9px;font-size:11.5px;font-family:'DejaVu Sans',sans-serif;font-weight:bold;color:#111;line-height:1;transform-origin:0 0;transform:rotate(-90deg) scaleX(0.9457) translateY(-10.2px);">480.0</span>
<div style="left:942px;top:140px;width:18px;height:610px;background:#f0f0f0"></div>
<div style="left:944px;top:498px;width:15px;height:18px;background:#cdcdcd"></div>
<svg style="left:946px;top:144px;" width="10" height="8" viewBox="0 0 10 8"><path d="M1.2 6.3L4.6 2.6L8 6.3" stroke="#505050" stroke-width="2" fill="none"/></svg>
<svg style="left:946px;top:739px;" width="10" height="8" viewBox="0 0 10 8"><path d="M1.2 1.7L4.6 5.4L8 1.7" stroke="#505050" stroke-width="2" fill="none"/></svg>
<div style="left:53px;top:750px;width:907px;height:17px;background:#f0f0f0"></div>
<div style="left:53px;top:750px;width:907px;height:1px;background:#fff"></div>
<div style="left:625px;top:752px;width:17px;height:14px;background:#cdcdcd"></div>
<svg style="left:56px;top:753px;" width="8" height="11" viewBox="0 0 8 11"><path d="M7 1.8L3.2 5.4L7 9" stroke="#505050" stroke-width="2" fill="none"/></svg>
<svg style="left:930px;top:753px;" width="8" height="11" viewBox="0 0 8 11"><path d="M1.5 1.8L5.3 5.4L1.5 9" stroke="#505050" stroke-width="2" fill="none"/></svg>
<svg style="left:54px;top:140px;shape-rendering:crispEdges" width="887" height="609" viewBox="54 140 887 609"><path d="M222.5 284.5 H772.5 A160.25 160.25 0 0 1 772.5 605 H222.5 A160.25 160.25 0 0 1 222.5 284.5 Z" fill="none" stroke="#000" stroke-width="1"/><circle cx="222.8" cy="445.0" r="137.8" fill="none" stroke="#00f" stroke-width="1"/><path d="M92.25 441.3 A130.6 130.6 0 1 1 223.80 575.60 V566.20 A121.2 121.2 0 0 1 101.62 442.8 Z" fill="none" stroke="#00f" stroke-width="1"/><path d="M154.4 409.5 V390.2 A13 13 0 0 1 167.4 377.2 H195.3 A26.4 26.4 0 0 1 247.3 377.2 H275.8 A13 13 0 0 1 288.8 390.2 V422.4 H293.2 L321.4 402.7 V485 L293.2 465.3 H288.8 V496.2 A15 15 0 0 1 273.8 511.2 H238.6 V501.8 A17.55 17.55 0 0 0 204.4 501.8 V511.2 H169.4 A15 15 0 0 1 154.4 496.2 V471.2 L159.8 470.5 L124.9 459.2 L159.8 448.9 L124.9 438.8 L159.8 428.1 L123.6 417 Z" fill="none" stroke="#f00" stroke-width="1" stroke-linejoin="miter"/><path d="M54 444.5 H941" stroke="#a8a890" stroke-width="1" stroke-dasharray="4 3"/><path d="M497.5 140 V749" stroke="#a8a890" stroke-width="1" stroke-dasharray="4 3"/><text transform="translate(380.47,394.2) scale(1.026,1)" style="font-family:&quot;Liberation Sans&quot;,sans-serif;font-size:77.7px;font-weight:bold;word-spacing:-12.55px" fill="none" stroke="#00f" stroke-width="1.25">North Shore</text><text transform="translate(380.47,470.8) scale(1.026,1)" style="font-family:&quot;Liberation Sans&quot;,sans-serif;font-size:77.7px;font-weight:bold;word-spacing:-6.95px" fill="none" stroke="#00f" stroke-width="1.25">Laser Cutter</text><text transform="translate(380.3,549.2) scale(1.026,1)" style="font-family:&quot;Liberation Sans&quot;,sans-serif;font-size:77.7px;font-weight:bold;word-spacing:0px" fill="none" stroke="#00f" stroke-width="1.25">Class</text><rect x="925" y="277" width="14.5" height="14.5" fill="#0f0" stroke="#0a6a0a" stroke-width="1"/></svg>
<!-- s6_right -->
<div style="left:960px;top:119px;width:1px;height:649px;background:#fff"></div>
<div style="left:965px;top:124px;width:274px;height:2px;background:#fff"></div>
<div style="left:965px;top:126px;width:274px;height:1px;background:#a0a0a0"></div>
<div style="left:965px;top:127px;width:274px;height:2px;background:#fff"></div>
<div style="left:965px;top:129px;width:274px;height:1px;background:#a0a0a0"></div>
<div style="left:1239px;top:124px;width:1px;height:6px;background:#a0a0a0"></div>
<svg style="left:1245px;top:124px;" width="7" height="7" viewBox="0 0 7 7"><path d="M0.8 0.8L5.8 5.8M5.8 0.8L0.8 5.8" stroke="#000" stroke-width="1.6"/></svg>
<div style="left:966px;top:155px;width:287px;height:328px;border:1px solid #fff;"></div>
<div style="left:1012px;top:138px;width:44px;height:17px;background:#f0f0f0;border-top:1px solid #d9d9d9;border-right:1px solid #d9d9d9"></div>
<span class="t" style="left:1015.00px;top:141.04px;font-size:11px;color:#000;transform:scaleX(1.0296);">Output</span>
<div style="left:1056px;top:138px;width:42px;height:17px;background:#f0f0f0;border-top:1px solid #d9d9d9;border-right:1px solid #d9d9d9"></div>
<span class="t" style="left:1061.00px;top:141.04px;font-size:11px;color:#000;transform:scaleX(0.9713);">Doc</span>
<div style="left:1098px;top:138px;width:42px;height:17px;background:#f0f0f0;border-top:1px solid #d9d9d9;border-right:1px solid #d9d9d9"></div>
<span class="t" style="left:1103.50px;top:141.04px;font-size:11px;color:#000;transform:scaleX(0.8827);">User</span>
<div style="left:1140px;top:138px;width:42px;height:17px;background:#f0f0f0;border-top:1px solid #d9d9d9;border-right:1px solid #d9d9d9"></div>
<span class="t" style="left:1146.00px;top:141.04px;font-size:11px;color:#000;transform:scaleX(1.0261);">Test</span>
<div style="left:1182px;top:138px;width:59px;height:17px;background:#f0f0f0;border-top:1px solid #d9d9d9;border-right:1px solid #d9d9d9"></div>
<span class="t" style="left:1188.00px;top:141.04px;font-size:11px;color:#000;transform:scaleX(0.9656);">Transform</span>
<div style="left:966px;top:135px;width:46px;height:21px;background:#fff;border:1px solid #d9d9d9;border-bottom:none"></div>
<span class="t" style="left:973.50px;top:139.04px;font-size:11px;color:#000;transform:scaleX(0.9621);">Work</span>
<div style="left:970px;top:158px;width:279px;height:176px;background:#fff;border:1px solid #828790"></div>
<div style="left:1021px;top:159px;width:1px;height:174px;background:#ececec"></div>
<div style="left:1082px;top:159px;width:1px;height:174px;background:#ececec"></div>
<div style="left:1137px;top:159px;width:1px;height:174px;background:#ececec"></div>
<div style="left:1192px;top:159px;width:1px;height:174px;background:#ececec"></div>
<div style="left:1247px;top:159px;width:1px;height:174px;background:#ececec"></div>
<div style="left:971px;top:200px;width:277px;height:1px;background:#ececec"></div>
<div style="left:971px;top:217px;width:277px;height:1px;background:#ececec"></div>
<div style="left:971px;top:234px;width:277px;height:1px;background:#ececec"></div>
<div style="left:971px;top:251px;width:277px;height:1px;background:#ececec"></div>
<div style="left:971px;top:268px;width:277px;height:1px;background:#ececec"></div>
<div style="left:971px;top:285px;width:277px;height:1px;background:#ececec"></div>
<div style="left:971px;top:302px;width:277px;height:1px;background:#ececec"></div>
<div style="left:971px;top:319px;width:277px;height:1px;background:#ececec"></div>
<div style="left:971px;top:183px;width:277px;height:1px;background:#f0f0f0"></div>
<span class="t" style="left:977.50px;top:166.04px;font-size:11px;color:#000;transform:scaleX(0.9267);">Layer</span>
<span class="t" style="left:1038.40px;top:166.04px;font-size:11px;color:#000;transform:scaleX(0.9303);">Mode</span>
<span class="t" style="left:1093.50px;top:166.04px;font-size:11px;color:#000;transform:scaleX(0.9274);">Speed</span>
<span class="t" style="left:1148.00px;top:166.04px;font-size:11px;color:#000;transform:scaleX(0.9429);">Power</span>
<span class="t" style="left:1201.00px;top:166.04px;font-size:11px;color:#000;transform:scaleX(1.0599);">Output</span>
<div style="left:972px;top:184px;width:49px;height:16px;background:#000"></div>
<div style="left:972px;top:201px;width:49px;height:16px;background:#00f"></div>
<div style="left:972px;top:218px;width:49px;height:16px;background:#f00"></div>
<div style="left:1023px;top:184px;width:224px;height:16px;background:#0000c8"></div>
<div style="left:1021px;top:184px;width:1px;height:16px;background:#fff"></div>
<div style="left:1082px;top:184px;width:1px;height:16px;background:#fff"></div>
<div style="left:1137px;top:184px;width:1px;height:16px;background:#fff"></div>
<div style="left:1192px;top:184px;width:1px;height:16px;background:#fff"></div>
<span class="t" style="left:1042.00px;top:185.24px;font-size:13px;color:#fff;transform:scaleX(0.9392);">Cut</span>
<span class="t" style="left:1096.30px;top:185.24px;font-size:13px;color:#fff;transform:scaleX(0.9920);">35.0</span>
<span class="t" style="left:1151.00px;top:185.24px;font-size:13px;color:#fff;transform:scaleX(0.9881);">50.0</span>
<span class="t" style="left:1209.60px;top:185.24px;font-size:13px;color:#fff;transform:scaleX(0.9336);">Yes</span>
<span class="t" style="left:1042.00px;top:201.83px;font-size:13px;color:#000;transform:scaleX(0.9392);">Cut</span>
<span class="t" style="left:1100.40px;top:201.83px;font-size:13px;color:#000;transform:scaleX(0.9905);">8.0</span>
<span class="t" style="left:1151.00px;top:201.83px;font-size:13px;color:#000;transform:scaleX(0.9881);">55.0</span>
<span class="t" style="left:1209.60px;top:201.83px;font-size:13px;color:#000;transform:scaleX(0.9336);">Yes</span>
<span class="t" style="left:1042.00px;top:218.83px;font-size:13px;color:#000;transform:scaleX(0.9392);">Cut</span>
<span class="t" style="left:1100.40px;top:218.83px;font-size:13px;color:#000;transform:scaleX(0.9905);">8.0</span>
<span class="t" style="left:1151.00px;top:218.83px;font-size:13px;color:#000;transform:scaleX(0.9881);">55.0</span>
<span class="t" style="left:1209.60px;top:218.83px;font-size:13px;color:#000;transform:scaleX(0.9336);">Yes</span>
<div style="left:1024px;top:337px;width:73px;height:18px;background:#e1e1e1;border:2px solid #0078d7"></div>
<span class="t" style="left:1053.40px;top:339.85px;font-size:11px;color:#000;transform:scaleX(0.9316);">Up</span>
<div class="btn" style="left:1109px;top:337px;width:73px;height:18px;"></div>
<span class="t" style="left:1131.40px;top:339.85px;font-size:11px;color:#000;transform:scaleX(0.9423);">Down</span>
<div style="left:970px;top:359px;width:277px;height:1px;background:#a0a0a0"></div>
<div style="left:970px;top:360px;width:277px;height:1px;background:#fff"></div>
<div style="left:970px;top:370px;width:279px;height:107px;border:1px solid #dcdcdc"></div>
<div style="left:975px;top:366px;width:92px;height:10px;background:#f0f0f0"></div>
<span class="t" style="left:978.30px;top:365.05px;font-size:11px;color:#000;transform:scaleX(0.9599);">Line/column setup</span>
<span class="t" style="left:1020.50px;top:384.65px;font-size:11px;color:#000;transform:scaleX(0.8827);">Num</span>
<span class="t" style="left:1070.60px;top:384.65px;font-size:11px;color:#000;transform:scaleX(0.9334);">space</span>
<span class="t" style="left:1113.50px;top:384.65px;font-size:11px;color:#000;transform:scaleX(0.9442);">Dislocation</span>
<span class="t" style="left:1190.50px;top:384.65px;font-size:11px;color:#000;transform:scaleX(0.9402);">Mirror</span>
<span class="t" style="left:987.80px;top:406.65px;font-size:11px;color:#000;transform:scaleX(0.8756);">X:</span>
<span class="t" style="left:987.80px;top:427.35px;font-size:11px;color:#000;transform:scaleX(0.9298);">Y:</span>
<div class="in" style="left:1005px;top:401px;width:53px;height:20px;"></div>
<span class="t" style="left:1012.40px;top:404.75px;font-size:11px;color:#6d6d6d;transform:scaleX(0.6865);">1</span>
<div class="in" style="left:1059px;top:401px;width:53px;height:20px;"></div>
<span class="t" style="left:1064.60px;top:404.75px;font-size:11px;color:#6d6d6d;transform:scaleX(1.0063);">0.000</span>
<div class="in" style="left:1113px;top:401px;width:53px;height:20px;"></div>
<span class="t" style="left:1118.60px;top:404.75px;font-size:11px;color:#6d6d6d;transform:scaleX(1.0063);">0.000</span>
<div class="in" style="left:1005px;top:423px;width:53px;height:20px;"></div>
<span class="t" style="left:1012.40px;top:426.44px;font-size:11px;color:#6d6d6d;transform:scaleX(0.6865);">1</span>
<div class="in" style="left:1059px;top:423px;width:53px;height:20px;"></div>
<span class="t" style="left:1064.60px;top:426.44px;font-size:11px;color:#6d6d6d;transform:scaleX(1.0063);">0.000</span>
<div class="in" style="left:1113px;top:423px;width:53px;height:20px;"></div>
<span class="t" style="left:1118.60px;top:426.44px;font-size:11px;color:#6d6d6d;transform:scaleX(1.0063);">0.000</span>
<div style="left:1167px;top:401px;width:77px;height:42px;border:1px solid #646464"></div>
<div style="left:1173px;top:406px;width:13px;height:13px;background:#f7f7f7;border:1px solid #c6c6c6"></div>
<span class="t" style="left:1188.90px;top:407.55px;font-size:11px;color:#838383;transform:scaleX(0.8308);">H</span>
<div style="left:1209px;top:406px;width:13px;height:13px;background:#f7f7f7;border:1px solid #c6c6c6"></div>
<span class="t" style="left:1224.40px;top:407.55px;font-size:11px;color:#838383;transform:scaleX(0.9268);">V</span>
<div style="left:1173px;top:425px;width:13px;height:13px;background:#f7f7f7;border:1px solid #c6c6c6"></div>
<span class="t" style="left:1188.90px;top:427.05px;font-size:11px;color:#838383;transform:scaleX(0.8308);">H</span>
<div style="left:1209px;top:425px;width:13px;height:13px;background:#f7f7f7;border:1px solid #c6c6c6"></div>
<span class="t" style="left:1224.40px;top:427.05px;font-size:11px;color:#838383;transform:scaleX(0.9268);">V</span>
<div style="left:979px;top:448px;width:24px;height:24px;background:#fff;border:1px solid #000;box-shadow:1px 1px 0 #555"></div>
<svg style="left:979px;top:448px;" width="24" height="24" viewBox="0 0 24 24"><path d="M3.5 3.5H19M3.5 3.5V19" stroke="#000" stroke-width="1" fill="none"/><path d="M17 1.8L19.6 3.5L17 5.2M1.8 17L3.5 19.6L5.2 17" stroke="#000" stroke-width=".9" fill="none"/><rect x="2.4" y="2.4" width="2.4" height="2.4" fill="#00f"/><rect x="6.2" y="6.6" width="3.2" height="3.2" fill="#0ff" stroke="#000" stroke-width="0.8"/><rect x="6.2" y="11.6" width="3.2" height="3.2" fill="#0ff" stroke="#000" stroke-width="0.8"/><rect x="6.2" y="16.6" width="3.2" height="3.2" fill="#0ff" stroke="#000" stroke-width="0.8"/><rect x="11.2" y="6.6" width="3.2" height="3.2" fill="#0ff" stroke="#000" stroke-width="0.8"/><rect x="11.2" y="11.6" width="3.2" height="3.2" fill="#0ff" stroke="#000" stroke-width="0.8"/><rect x="11.2" y="16.6" width="3.2" height="3.2" fill="#0ff" stroke="#000" stroke-width="0.8"/><rect x="16.2" y="6.6" width="3.2" height="3.2" fill="#0ff" stroke="#000" stroke-width="0.8"/><rect x="16.2" y="11.6" width="3.2" height="3.2" fill="#0ff" stroke="#000" stroke-width="0.8"/><rect x="16.2" y="16.6" width="3.2" height="3.2" fill="#0ff" stroke="#000" stroke-width="0.8"/></svg>
<div class="btnd" style="left:1006px;top:448px;width:79px;height:24px;"></div>
<span class="t" style="left:1015.70px;top:453.85px;font-size:11px;color:#838383;transform:scaleX(0.9881);">Virtual array</span>
<div class="btnd" style="left:1088px;top:448px;width:76px;height:24px;"></div>
<span class="t" style="left:1099.40px;top:453.85px;font-size:11px;color:#838383;transform:scaleX(1.0373);">Bestrew...</span>
<div class="btnd" style="left:1166px;top:448px;width:76px;height:24px;"></div>
<span class="t" style="left:1188.10px;top:453.85px;font-size:11px;color:#838383;transform:scaleX(0.9911);">Adjust</span>
<div style="left:961px;top:638px;width:297px;height:130px;background:#f0f0f0;border-top:1px solid #a0a0a0;border-bottom:1px solid #a0a0a0"></div>
<div style="left:961px;top:639px;width:297px;height:1px;background:#fff"></div>
<div style="left:965px;top:644px;width:274px;height:2px;background:#fff"></div>
<div style="left:965px;top:646px;width:274px;height:1px;background:#a0a0a0"></div>
<div style="left:965px;top:647px;width:274px;height:2px;background:#fff"></div>
<div style="left:965px;top:649px;width:274px;height:1px;background:#a0a0a0"></div>
<div style="left:1239px;top:644px;width:1px;height:6px;background:#a0a0a0"></div>
<svg style="left:1245px;top:644px;" width="7" height="7" viewBox="0 0 7 7"><path d="M0.8 0.8L5.8 5.8M5.8 0.8L0.8 5.8" stroke="#000" stroke-width="1.6"/></svg>
<div style="left:962px;top:655px;width:296px;height:109px;overflow:hidden">
<div style="left:5px;top:6px;width:286px;height:120px;border:1px solid #dcdcdc"></div>
</div>
<div style="left:972px;top:657px;width:58px;height:10px;background:#f0f0f0"></div>
<span class="t" style="left:975.40px;top:655.84px;font-size:11px;color:#000;transform:scaleX(0.9629);">Laser work</span>
<div class="btn" style="left:977px;top:672px;width:90px;height:21px;"></div>
<span class="t" style="left:1009.30px;top:677.25px;font-size:11px;color:#000;transform:scaleX(1.0546);">Start</span>
<div class="btn" style="left:1070px;top:672px;width:99px;height:21px;"></div>
<span class="t" style="left:1080.00px;top:677.25px;font-size:11px;color:#000;transform:scaleX(0.9709);">Pause/Continue</span>
<div class="btn" style="left:1172px;top:672px;width:70px;height:21px;"></div>
<span class="t" style="left:1195.30px;top:677.25px;font-size:11px;color:#000;transform:scaleX(0.9678);">Stop</span>
<div class="btn" style="left:977px;top:697px;width:90px;height:21px;"></div>
<span class="t" style="left:991.40px;top:702.34px;font-size:11px;color:#000;transform:scaleX(0.9445);">SaveToUFile</span>
<div class="btn" style="left:1070px;top:697px;width:99px;height:21px;"></div>
<span class="t" style="left:1089.90px;top:702.34px;font-size:11px;color:#000;transform:scaleX(0.9831);">UFileOutput</span>
<div style="left:1172px;top:697px;width:70px;height:21px;background:#e1e1e1;border:2px solid #0078d7"></div>
<span class="t" style="left:1182.20px;top:702.34px;font-size:11px;color:#000;transform:scaleX(0.9648);">Download</span>
<div style="left:976px;top:728px;width:13px;height:13px;background:#fff;border:1px solid #333"></div>
<svg style="left:976px;top:728px;" width="13" height="13" viewBox="0 0 13 13"><path d="M2.6 6.4L5.2 9.2L10.6 3.2" stroke="#222" stroke-width="1.1" fill="none"/></svg>
<span class="t" style="left:991.40px;top:729.25px;font-size:11px;color:#000;transform:scaleX(0.9543);">Path optimize</span>
<div style="left:976px;top:745px;width:13px;height:13px;background:#fff;border:1px solid #333"></div>
<span class="t" style="left:991.40px;top:746.04px;font-size:11px;color:#000;transform:scaleX(0.9868);">Output select graphics</span>
<div class="btn" style="left:1172px;top:723px;width:70px;height:21px;"></div>
<span class="t" style="left:1184.00px;top:728.54px;font-size:11px;color:#000;transform:scaleX(0.9639);">Cut scale</span>
<div style="left:1172px;top:747px;width:70px;height:17px;overflow:hidden">
<div class="btn" style="left:0px;top:0px;width:70px;height:21px;"></div>
</div>
<div style="left:1172px;top:747px;width:70px;height:17px;overflow:hidden">
<span class="t" style="left:14.50px;top:4.94px;font-size:11px;color:#000;transform:scaleX(0.9168);">Go scale</span>
</div>
<!-- s7_bottom -->
<div style="left:0px;top:768px;width:1258px;height:1px;background:#fff"></div>
<svg style="left:5px;top:775px;" width="7" height="7" viewBox="0 0 7 7"><path d="M0.8 0.8L5.8 5.8M5.8 0.8L0.8 5.8" stroke="#000" stroke-width="1.6"/></svg>
<div style="left:6px;top:787px;width:1px;height:8px;background:#a0a0a0"></div>
<div style="left:9px;top:787px;width:1px;height:8px;background:#a0a0a0"></div>
<div style="left:21px;top:772px;width:24px;height:26px;background:#000000;border:1px solid #b4b4b4"></div>
<div style="left:46px;top:772px;width:24px;height:26px;background:#0000ff;border:1px solid #b4b4b4"></div>
<div style="left:72px;top:772px;width:23px;height:26px;background:#ff0000;border-top:3px solid #000;border-left:3px solid #000;border-right:1px solid #fff;border-bottom:1px solid #fff"></div>
<div style="left:97px;top:772px;width:24px;height:26px;background:#00ff00;border:1px solid #b4b4b4"></div>
<div style="left:122px;top:772px;width:24px;height:26px;background:#fa8072;border:1px solid #b4b4b4"></div>
<div style="left:148px;top:772px;width:24px;height:26px;background:#ffff00;border:1px solid #b4b4b4"></div>
<div style="left:173px;top:772px;width:24px;height:26px;background:#1e90ff;border:1px solid #b4b4b4"></div>
<div style="left:199px;top:772px;width:24px;height:26px;background:#8b3a12;border:1px solid #b4b4b4"></div>
<div style="left:224px;top:772px;width:24px;height:26px;background:#808000;border:1px solid #b4b4b4"></div>
<div style="left:249px;top:772px;width:24px;height:26px;background:#008060;border:1px solid #b4b4b4"></div>
<div style="left:275px;top:772px;width:24px;height:26px;background:#ff4500;border:1px solid #b4b4b4"></div>
<div style="left:300px;top:772px;width:24px;height:26px;background:#400080;border:1px solid #b4b4b4"></div>
<div style="left:326px;top:772px;width:24px;height:26px;background:#fbd0dc;border:1px solid #b4b4b4"></div>
<div style="left:351px;top:772px;width:24px;height:26px;background:#b0a0f0;border:1px solid #b4b4b4"></div>
<div style="left:377px;top:772px;width:24px;height:26px;background:#d2f8a0;border:1px solid #b4b4b4"></div>
<div style="left:402px;top:772px;width:24px;height:26px;background:#f89060;border:1px solid #b4b4b4"></div>
<div style="left:427px;top:772px;width:24px;height:26px;background:#d87098;border:1px solid #b4b4b4"></div>
<div style="left:453px;top:772px;width:24px;height:26px;background:#8878d8;border:1px solid #b4b4b4"></div>
<div style="left:478px;top:772px;width:24px;height:26px;background:#78d878;border:1px solid #b4b4b4"></div>
<div style="left:504px;top:772px;width:24px;height:26px;background:#b0a070;border:1px solid #b4b4b4"></div>
<div style="left:0px;top:800px;width:1258px;height:1px;background:#a8a8a8"></div>
<div style="left:0px;top:801px;width:1258px;height:1px;background:#fff"></div>
<div style="left:2px;top:804px;width:799px;height:17px;border-top:1px solid #a0a0a0;border-left:1px solid #a0a0a0;border-right:1px solid #fff;border-bottom:1px solid #fff"></div>
<div style="left:805px;top:804px;width:242px;height:17px;border-top:1px solid #a0a0a0;border-left:1px solid #a0a0a0;border-right:1px solid #fff;border-bottom:1px solid #fff"></div>
<div style="left:1050px;top:804px;width:188px;height:17px;border-top:1px solid #a0a0a0;border-left:1px solid #a0a0a0;border-right:1px solid #fff;border-bottom:1px solid #fff"></div>
<span class="t" style="left:3.40px;top:805.84px;font-size:12px;color:#000;transform:scaleX(0.9863);">--- *Welcome to use the Laser system of cutting,Propose the display area 1024*768 or higher *---</span>
<span class="t" style="left:808.60px;top:805.84px;font-size:12px;color:#000;transform:scaleX(0.9272);">1 curve object,SizeX18.482,Y14.598</span>
<span class="t" style="left:1052.00px;top:805.84px;font-size:12px;color:#000;transform:scaleX(0.9442);">X:612.600mm,Y:451.276mm</span>
<svg style="left:1245px;top:811px;" width="12" height="10" viewBox="0 0 12 10"><rect x="8" y="1" width="2" height="2" fill="#b8b8b8"/><rect x="5" y="4" width="2" height="2" fill="#b8b8b8"/><rect x="8" y="4" width="2" height="2" fill="#b8b8b8"/><rect x="2" y="7" width="2" height="2" fill="#b8b8b8"/><rect x="5" y="7" width="2" height="2" fill="#b8b8b8"/><rect x="8" y="7" width="2" height="2" fill="#b8b8b8"/></svg>
<div style="left:1257px;top:0px;width:1px;height:823px;background:#1d4f8c"></div>
<div style="left:0px;top:822px;width:1240px;height:1px;background:#8c8c8c"></div>
<div style="left:1240px;top:822px;width:18px;height:1px;background:#1d4f8c"></div>
<!-- s8_dialog -->
<div style="left:465px;top:178px;width:329px;height:472px;background:#f0f0f0;border:1px solid #1883d7;box-shadow:0 2px 16px 1px rgba(0,0,0,.38)"></div>
<div style="left:466px;top:179px;width:327px;height:25px;background:#fff"></div>
<span class="t" style="left:469.50px;top:184.34px;font-size:12px;color:#000;transform:scaleX(0.9432);">Layer Parameter</span>
<svg style="left:773px;top:186px;" width="11" height="11" viewBox="0 0 11 11"><path d="M0.3 0.3L10 10M10 0.3L0.3 10" stroke="#000" stroke-width="1.1"/></svg>
<div style="left:469px;top:209px;width:33px;height:23px;background:#f0f0f0;border-top:1px solid #fff;border-left:1px solid #fff;border-right:1px solid #696969;border-bottom:1px solid #696969;box-shadow:inset -1px -1px 0 #a0a0a0"></div>
<svg style="left:474px;top:214px;" width="22" height="13" viewBox="0 0 22 13"><path d="M9.4 1.4L0.8 10.6H18Z" fill="#b4b4b4" stroke="#000" stroke-width="1"/></svg>
<div style="left:469px;top:233px;width:33px;height:385px;background:#fff;border:1px solid #828790;border-right-color:#dcdcdc;border-bottom-color:#dcdcdc"></div>
<div style="left:471px;top:235px;width:29px;height:16px;background:#000"></div>
<div style="left:471px;top:252px;width:29px;height:16px;background:#00f"></div>
<div style="left:471px;top:269px;width:29px;height:16px;background:#f00"></div>
<div style="left:469px;top:620px;width:33px;height:23px;background:#f0f0f0;border-top:1px solid #fff;border-left:1px solid #fff;border-right:1px solid #696969;border-bottom:1px solid #696969;box-shadow:inset -1px -1px 0 #a0a0a0"></div>
<svg style="left:474px;top:625px;" width="22" height="13" viewBox="0 0 22 13"><path d="M9.4 11.2L0.8 2H18Z" fill="#b4b4b4" stroke="#000" stroke-width="1"/></svg>
<div style="left:507px;top:209px;width:1px;height:424px;background:#a0a0a0"></div>
<div style="left:508px;top:209px;width:1px;height:424px;background:#fff"></div>
<div class="btn" style="left:514px;top:210px;width:273px;height:27px;"></div>
<span class="t" style="left:580.00px;top:217.74px;font-size:11px;color:#000;transform:scaleX(0.9856);">Load parameters from library</span>
<span class="t" style="left:588.20px;top:250.74px;font-size:11px;color:#000;transform:scaleX(0.9943);">Layer:</span>
<div style="left:630px;top:245px;width:78px;height:20px;background:#00f;border:2px solid #000"></div>
<span class="t" style="left:569.40px;top:274.94px;font-size:11px;color:#000;transform:scaleX(1.0317);">Is Output:</span>
<div style="left:630px;top:269px;width:78px;height:21px;background:#fff;border:1px solid #adadad"></div>
<div style="left:632px;top:271px;width:57px;height:17px;background:#e5f1fb"></div>
<div style="left:691px;top:270px;width:16px;height:19px;background:#f0f0f0;border-left:1px solid #adadad"></div>
<svg style="left:695px;top:277px;" width="8" height="5" viewBox="0 0 8 5"><path d="M0.3 0.3H7.7L4 4.4Z" fill="#000"/></svg>
<span class="t" style="left:633.60px;top:274.05px;font-size:11px;color:#000;transform:scaleX(0.9362);">Yes</span>
<span class="t" style="left:552.70px;top:298.35px;font-size:11px;color:#000;transform:scaleX(0.9540);">Speed(mm/s):</span>
<div style="left:630px;top:292px;width:78px;height:23px;background:#fff;border:1px solid #7a7a7a"></div>
<span class="t" style="left:635.60px;top:295.85px;font-size:11px;color:#000;transform:scaleX(0.9480);">8</span>
<div style="left:714px;top:298px;width:13px;height:13px;background:#fff;border:1px solid #333"></div>
<span class="t" style="left:729.80px;top:298.35px;font-size:11px;color:#000;">Default</span>
<span class="t" style="left:568.80px;top:321.05px;font-size:11px;color:#000;transform:scaleX(0.9813);">If Blowing:</span>
<div style="left:630px;top:318px;width:78px;height:21px;background:#fff;border:1px solid #adadad"></div>
<div style="left:632px;top:320px;width:57px;height:17px;background:#e5f1fb"></div>
<div style="left:691px;top:319px;width:16px;height:19px;background:#f0f0f0;border-left:1px solid #adadad"></div>
<svg style="left:695px;top:326px;" width="8" height="5" viewBox="0 0 8 5"><path d="M0.3 0.3H7.7L4 4.4Z" fill="#000"/></svg>
<span class="t" style="left:633.60px;top:322.65px;font-size:11px;color:#000;transform:scaleX(0.9362);">Yes</span>
<span class="t" style="left:535.40px;top:344.75px;font-size:11px;color:#000;transform:scaleX(0.9450);">Processing Mode:</span>
<div style="left:630px;top:341px;width:78px;height:21px;background:#fff;border:1px solid #adadad"></div>
<div style="left:632px;top:343px;width:57px;height:17px;background:#e5f1fb"></div>
<div style="left:691px;top:342px;width:16px;height:19px;background:#f0f0f0;border-left:1px solid #adadad"></div>
<svg style="left:695px;top:349px;" width="8" height="5" viewBox="0 0 8 5"><path d="M0.3 0.3H7.7L4 4.4Z" fill="#000"/></svg>
<span class="t" style="left:633.60px;top:346.05px;font-size:11px;color:#000;">Cut</span>
<div class="btn" style="left:713px;top:340px;width:72px;height:21px;"></div>
<span class="t" style="left:722.20px;top:344.75px;font-size:11px;color:#000;transform:scaleX(1.0062);">Advance...</span>
<div style="left:513px;top:369px;width:275px;height:81px;border:1px solid #dcdcdc;box-shadow:inset 1px 1px 0 #fafafa"></div>
<span class="t" style="left:575.50px;top:375.75px;font-size:11px;color:#000;transform:scaleX(0.9802);">Min Power(%)</span>
<span class="t" style="left:647.50px;top:375.75px;font-size:11px;color:#000;transform:scaleX(0.9941);">Max Power(%)</span>
<div style="left:540px;top:398px;width:13px;height:13px;background:#fff;border:1px solid #333"></div>
<svg style="left:540px;top:398px;" width="13" height="13" viewBox="0 0 13 13"><path d="M2.6 6.4L5.2 9.2L10.6 3.2" stroke="#222" stroke-width="1.1" fill="none"/></svg>
<span class="t" style="left:557.20px;top:399.15px;font-size:11px;color:#000;transform:scaleX(0.8284);">1:</span>
<div style="left:580px;top:393px;width:59px;height:23px;background:#fff;border:1px solid #7a7a7a"></div>
<span class="t" style="left:586.10px;top:397.05px;font-size:11px;color:#000;transform:scaleX(0.9399);">55</span>
<div style="left:649px;top:393px;width:59px;height:23px;background:#fff;border:1px solid #7a7a7a"></div>
<span class="t" style="left:655.00px;top:397.05px;font-size:11px;color:#000;transform:scaleX(0.9399);">55</span>
<div style="left:714px;top:398px;width:13px;height:13px;background:#fff;border:1px solid #333"></div>
<span class="t" style="left:729.80px;top:399.15px;font-size:11px;color:#000;">Default</span>
<div style="left:540px;top:424px;width:13px;height:13px;background:#fff;border:1px solid #333"></div>
<span class="t" style="left:557.20px;top:424.85px;font-size:11px;color:#000;transform:scaleX(0.8502);">2:</span>
<div class="in" style="left:580px;top:420px;width:59px;height:22px;"></div>
<span class="t" style="left:585.70px;top:423.85px;font-size:11px;color:#6d6d6d;transform:scaleX(0.8827);">30</span>
<div class="in" style="left:649px;top:420px;width:59px;height:22px;"></div>
<span class="t" style="left:654.70px;top:423.85px;font-size:11px;color:#6d6d6d;transform:scaleX(0.8827);">30</span>
<div style="left:513px;top:455px;width:275px;height:156px;border:1px solid #dcdcdc;box-shadow:inset 1px 1px 0 #fafafa"></div>
<span class="t" style="left:601.20px;top:470.05px;font-size:11px;color:#000;transform:scaleX(0.9492);">Seal:</span>
<div style="left:633px;top:464px;width:62px;height:23px;background:#fff;border:1px solid #0078d7"></div>
<span class="t" style="left:638.50px;top:468.05px;font-size:11px;color:#000;transform:scaleX(1.0353);">0.000</span>
<div style="left:639px;top:469px;width:1px;height:12px;background:#000"></div>
<span class="t" style="left:697.60px;top:470.05px;font-size:11px;color:#000;transform:scaleX(0.8621);">mm</span>
<div style="left:718px;top:465px;width:64px;height:21px;background:#e1e1e1;border:2px solid #0078d7"></div>
<span class="t" style="left:722.90px;top:470.05px;font-size:11px;color:#000;transform:scaleX(1.0081);">Advance...</span>
<div style="left:522px;top:492px;width:264px;height:112px;border:1px solid #dcdcdc;box-shadow:inset 1px 1px 0 #fafafa"></div>
<span class="t" style="left:565.20px;top:504.44px;font-size:11px;color:#000;transform:scaleX(0.9780);">Open Delay:</span>
<div style="left:633px;top:499px;width:62px;height:23px;background:#fff;border:1px solid #7a7a7a"></div>
<span class="t" style="left:639.10px;top:502.84px;font-size:11px;color:#000;transform:scaleX(0.8827);">0</span>
<span class="t" style="left:697.60px;top:504.44px;font-size:11px;color:#000;transform:scaleX(0.8866);">ms</span>
<span class="t" style="left:565.20px;top:530.64px;font-size:11px;color:#000;transform:scaleX(0.9590);">Close Delay:</span>
<div style="left:633px;top:525px;width:62px;height:23px;background:#fff;border:1px solid #7a7a7a"></div>
<span class="t" style="left:639.10px;top:529.04px;font-size:11px;color:#000;transform:scaleX(0.8827);">0</span>
<span class="t" style="left:697.60px;top:530.64px;font-size:11px;color:#000;transform:scaleX(0.8866);">ms</span>
<div style="left:633px;top:555px;width:13px;height:13px;background:#fff;border:1px solid #333"></div>
<svg style="left:633px;top:555px;" width="13" height="13" viewBox="0 0 13 13"><path d="M2.6 6.4L5.2 9.2L10.6 3.2" stroke="#222" stroke-width="1.1" fill="none"/></svg>
<span class="t" style="left:648.60px;top:555.25px;font-size:11px;color:#000;transform:scaleX(0.9730);">Laser through mode</span>
<span class="t" style="left:548.50px;top:580.54px;font-size:11px;color:#000;transform:scaleX(0.9929);">Through power:</span>
<div style="left:633px;top:574px;width:62px;height:23px;background:#fff;border:1px solid #7a7a7a"></div>
<span class="t" style="left:639.10px;top:578.64px;font-size:11px;color:#000;transform:scaleX(0.9762);">50.0</span>
<span class="t" style="left:699.20px;top:580.54px;font-size:11px;color:#000;transform:scaleX(1.0633);">%</span>
<div class="btn" style="left:572px;top:621px;width:73px;height:21px;"></div>
<span class="t" style="left:601.20px;top:626.04px;font-size:11px;color:#000;transform:scaleX(0.9676);">Ok</span>
<div class="btn" style="left:659px;top:621px;width:73px;height:21px;"></div>
<span class="t" style="left:678.60px;top:626.04px;font-size:11px;color:#000;transform:scaleX(0.9345);">Cancel</span>
</body></html>
